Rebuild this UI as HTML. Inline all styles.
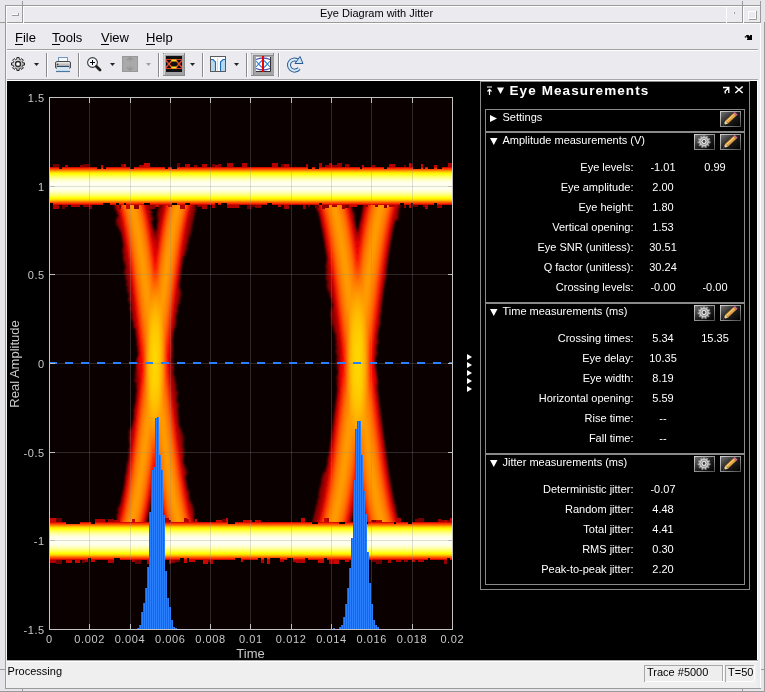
<!DOCTYPE html><html><head><meta charset="utf-8"><style>
html,body{margin:0;padding:0;background:#e9e8ec;width:765px;height:692px;overflow:hidden}
svg{position:absolute;left:0;top:0;display:block}
text{font-family:'Liberation Sans', sans-serif}
.blend{isolation:isolate}
.scr{mix-blend-mode:screen}
</style></head><body>
<svg width="765" height="692" viewBox="0 0 765 692">
<defs>
<linearGradient id="band" x1="0" y1="0" x2="0" y2="1">
 <stop offset="0" stop-color="#b00000"/>
 <stop offset="0.03" stop-color="#ff2000"/>
 <stop offset="0.08" stop-color="#ff7000"/>
 <stop offset="0.13" stop-color="#ffd000"/>
 <stop offset="0.18" stop-color="#ffff00"/>
 <stop offset="0.26" stop-color="#ffff70"/>
 <stop offset="0.34" stop-color="#ffffc0"/>
 <stop offset="0.42" stop-color="#fffff0"/>
 <stop offset="0.58" stop-color="#fffff0"/>
 <stop offset="0.66" stop-color="#ffffc0"/>
 <stop offset="0.74" stop-color="#ffff70"/>
 <stop offset="0.82" stop-color="#ffff00"/>
 <stop offset="0.87" stop-color="#ffd000"/>
 <stop offset="0.92" stop-color="#ff7000"/>
 <stop offset="0.97" stop-color="#ff2000"/>
 <stop offset="1" stop-color="#b00000"/>
</linearGradient>
<linearGradient id="arm" gradientUnits="userSpaceOnUse" x1="-17" y1="0" x2="17" y2="0">
 <stop offset="0" stop-color="#700000"/>
 <stop offset="0.06" stop-color="#b00000"/>
 <stop offset="0.16" stop-color="#f01000"/>
 <stop offset="0.28" stop-color="#ff5800"/>
 <stop offset="0.37" stop-color="#ff8400"/>
 <stop offset="0.50" stop-color="#ff9400"/>
 <stop offset="0.63" stop-color="#ff8400"/>
 <stop offset="0.72" stop-color="#ff5800"/>
 <stop offset="0.84" stop-color="#f01000"/>
 <stop offset="0.94" stop-color="#b00000"/>
 <stop offset="1" stop-color="#700000"/>
</linearGradient>
<linearGradient id="gearg" x1="0" y1="0" x2="1" y2="1"><stop offset="0" stop-color="#fafafa"/><stop offset="1" stop-color="#a0a0a0"/></linearGradient>
<linearGradient id="prng" x1="0" y1="0" x2="0" y2="1"><stop offset="0" stop-color="#f4f4f4"/><stop offset="0.5" stop-color="#b8b8b8"/><stop offset="1" stop-color="#888"/></linearGradient>
<clipPath id="axclip"><rect x="50" y="98" width="402" height="531"/></clipPath>
</defs>

<rect x="0" y="0" width="765" height="692" fill="#e6e5e9"/>
<rect x="6" y="6" width="754" height="682" fill="#ebeaee"/>
<rect x="5" y="5" width="756" height="1" fill="#9a9a9a"/>
<rect x="6" y="6" width="754" height="1" fill="#ffffff"/>
<rect x="5" y="22" width="756" height="1" fill="#9a9a9a"/>
<rect x="6" y="23" width="754" height="1" fill="#ffffff"/>
<rect x="5" y="5" width="1" height="684" fill="#9a9a9a"/>
<rect x="6" y="6" width="1" height="17" fill="#ffffff"/>
<rect x="6" y="23" width="1" height="666" fill="#f4f3f7"/>
<rect x="22" y="1" width="1" height="22" fill="#9a9a9a"/>
<rect x="23" y="6" width="1" height="17" fill="#ffffff"/>
<rect x="726" y="6" width="1" height="17" fill="#ffffff"/>
<rect x="742" y="1" width="1" height="22" fill="#9a9a9a"/>
<rect x="743" y="6" width="1" height="17" fill="#ffffff"/>
<rect x="760" y="1" width="1" height="22" fill="#9a9a9a"/>
<rect x="760" y="23" width="1" height="665" fill="#ffffff"/>
<rect x="757" y="81" width="1" height="579" fill="#ffffff"/>
<rect x="764" y="22" width="1" height="671" fill="#9a9a9a"/>
<rect x="0" y="22" width="6" height="1" fill="#9a9a9a"/>
<rect x="12" y="14" width="7" height="1" fill="#ffffff"/>
<rect x="12" y="15" width="7" height="1" fill="#9a9a9a"/>
<rect x="18" y="13" width="1" height="2" fill="#9a9a9a"/>
<rect x="734" y="12" width="1" height="2" fill="#9a9a9a"/>
<rect x="733" y="13" width="1" height="1" fill="#ffffff"/>
<rect x="748.5" y="11.5" width="7" height="7" fill="none" stroke="#ffffff"/>
<path d="M749 19.5H756.5V11" fill="none" stroke="#9a9a9a"/>
<text x="320" y="17" font-size="11" fill="#000">Eye Diagram with Jitter</text>
<rect x="5" y="688" width="756" height="1" fill="#9a9a9a"/>
<rect x="0" y="691" width="766" height="1" fill="#9a9a9a"/>
<rect x="742" y="688" width="1" height="5" fill="#9a9a9a"/>
<rect x="761" y="669" width="5" height="1" fill="#9a9a9a"/>
<rect x="22" y="688" width="1" height="5" fill="#9a9a9a"/>
<rect x="0" y="669" width="6" height="1" fill="#9a9a9a"/>
<text x="15" y="42" font-size="13" fill="#000">File</text>
<rect x="15" y="44" width="8" height="1" fill="#000"/>
<text x="52" y="42" font-size="13" fill="#000">Tools</text>
<rect x="52" y="44" width="8" height="1" fill="#000"/>
<text x="101" y="42" font-size="13" fill="#000">View</text>
<rect x="101" y="44" width="8" height="1" fill="#000"/>
<text x="146" y="42" font-size="13" fill="#000">Help</text>
<rect x="146" y="44" width="9" height="1" fill="#000"/>
<rect x="7" y="49" width="751" height="1" fill="#a0a0a0"/>
<rect x="7" y="50" width="751" height="1" fill="#ffffff"/>
<path d="M746 35 H748.5 L750 36.5 V35 H752 V40 H747 V38.5 H748 L746.5 37 Z" fill="#000"/>
<rect x="744.8" y="36.2" width="1.4" height="1.4" fill="#000"/>
<polygon points="16.83,59.14 16.87,57.50 19.13,57.50 19.17,59.14 20.61,59.74 21.80,58.60 23.40,60.20 22.26,61.39 22.86,62.83 24.50,62.87 24.50,65.13 22.86,65.17 22.26,66.61 23.40,67.80 21.80,69.40 20.61,68.26 19.17,68.86 19.13,70.50 16.87,70.50 16.83,68.86 15.39,68.26 14.20,69.40 12.60,67.80 13.74,66.61 13.14,65.17 11.50,65.13 11.50,62.87 13.14,62.83 13.74,61.39 12.60,60.20 14.20,58.60 15.39,59.74" fill="url(#gearg)" stroke="#262626" stroke-width="1" stroke-linejoin="round"/>
<circle cx="18" cy="64" r="2.5" fill="#ffffff" stroke="#262626" stroke-width="1.3"/>
<path d="M34 63 H39 L36.5 66 Z" fill="#222"/>
<rect x="46" y="53" width="1" height="24" fill="#8a8a8a"/>
<rect x="47" y="53" width="1" height="24" fill="#ffffff"/>
<rect x="58.5" y="57.5" width="9" height="4.5" fill="#f4f8fc" stroke="#7098c0"/>
<rect x="55.5" y="61.5" width="15" height="7" rx="1.5" fill="url(#prng)" stroke="#484848"/>
<circle cx="57.6" cy="64.4" r="0.8" fill="#303030"/>
<path d="M57 66.5 H69 L70 71.5 H56 Z" fill="#d4e6f2"/>
<path d="M57 66.5 H69" stroke="#2a4a70" stroke-width="1"/>
<path d="M56 71.5 H70" stroke="#4a78a0" stroke-width="1.2"/>
<rect x="78" y="53" width="1" height="24" fill="#8a8a8a"/>
<rect x="79" y="53" width="1" height="24" fill="#ffffff"/>
<circle cx="92.5" cy="62.5" r="4.9" fill="#f2f8fc" stroke="#3a3a3a" stroke-width="1.1"/>
<path d="M90 62.5 H95 M92.5 60 V65" stroke="#000" stroke-width="1"/>
<path d="M96.5 66.5 L100 70" stroke="#202020" stroke-width="2.8" stroke-linecap="round"/>
<path d="M110 63 H115 L112.5 66 Z" fill="#222"/>
<rect x="122.5" y="56.5" width="15" height="15" fill="#a9a9a9" stroke="#999"/>
<path d="M127 60 L130 57.3 L133 60 M130 57.5 V61.5 M127 67.5 L130 70.2 L133 67.5 M130 66 V70" stroke="#949494" stroke-width="1.2" fill="none"/>
<path d="M146 63 H151 L148.5 66 Z" fill="#a0a0a0"/>
<rect x="158" y="53" width="1" height="24" fill="#8a8a8a"/>
<rect x="159" y="53" width="1" height="24" fill="#ffffff"/>
<rect x="163.5" y="53.5" width="21" height="22" fill="#a2a2a2" stroke="#8a8a8a"/>
<path d="M164 75 V54 H184" stroke="#ffffff" fill="none"/>
<rect x="166" y="56" width="16" height="16" fill="#111"/>
<path d="M166 59.5 H182 M166 68.5 H182" stroke="#e03a28" stroke-width="1.2" fill="none"/>
<path d="M166 60.5 L169 64 L166 67.5 M182 60.5 L179 64 L182 67.5 M169 64 L172 60.5 M169 64 L172 67.5 M179 64 L176 60.5 M179 64 L176 67.5" stroke="#f05030" stroke-width="1.2" fill="none"/>
<path d="M171.5 60.5 H176.5 M171.5 67.5 H176.5" stroke="#f8e020" stroke-width="1.8"/>
<path d="M190 63 H195 L192.5 66 Z" fill="#222"/>
<rect x="202" y="53" width="1" height="24" fill="#8a8a8a"/>
<rect x="203" y="53" width="1" height="24" fill="#ffffff"/>
<rect x="210.5" y="56.5" width="15" height="15" fill="#ffffff" stroke="#5a5a5a"/>
<path d="M211 60 H213 L215.5 62.5 V71 H211 Z M225 60 H223 L220.5 62.5 V71 H225 Z" fill="#b4d8ee"/>
<path d="M211 59.5 H213 L215.5 62 V71 M225 59.5 H223 L220.5 62 V71" stroke="#1a68c0" stroke-width="1.1" fill="none"/>
<rect x="217" y="58" width="1" height="13" fill="#d8d8d8"/>
<path d="M234 63 H239 L236.5 66 Z" fill="#222"/>
<rect x="246" y="53" width="1" height="24" fill="#8a8a8a"/>
<rect x="247" y="53" width="1" height="24" fill="#ffffff"/>
<rect x="251.5" y="53.5" width="22" height="22" fill="#a2a2a2" stroke="#8a8a8a"/>
<path d="M252 75 V54 H273" stroke="#ffffff" fill="none"/>
<rect x="253" y="55" width="21" height="20" fill="#a4a4a4"/>
<path d="M253.5 75 V55.5 H274" stroke="#8a8a8a" fill="none"/>
<rect x="256" y="57" width="14.5" height="14.5" fill="#ffffff"/>
<path d="M256 71.5 H270.5 V57" stroke="#303030" fill="none"/>
<path d="M256 59.5 Q263 56.5 270 59.5 M256 68.5 Q263 71.5 270 68.5" stroke="#4450b0" stroke-width="1.3" fill="none"/>
<path d="M256 61 L258.5 64 L256 67 M258.5 64 L262 60.5 M258.5 64 L262 67.5 M270 61 L267.5 64 L270 67 M267.5 64 L264 60.5 M267.5 64 L264 67.5" stroke="#3a80d0" stroke-width="1.1" fill="none"/>
<rect x="262" y="56" width="2" height="16" fill="#f00000"/>
<rect x="278" y="53" width="1" height="24" fill="#8a8a8a"/>
<rect x="279" y="53" width="1" height="24" fill="#ffffff"/>
<path d="M298.5 61 A5.6 5.6 0 1 0 299 68.5" stroke="#2a5a90" stroke-width="4" fill="none"/>
<path d="M298.5 61 A5.6 5.6 0 1 0 299 68.5" stroke="#d8ecfa" stroke-width="2" fill="none"/>
<path d="M295 63.5 L303 63.5 L300 56.5 Z" fill="#c8e2f6" stroke="#2a5a90" stroke-width="1"/>
<rect x="7" y="79" width="751" height="1" fill="#a8a8a8"/>
<rect x="7" y="80" width="751" height="1" fill="#ffffff"/>
<rect x="7" y="81" width="750" height="579" fill="#000000"/>
<rect x="7" y="660" width="751" height="1" fill="#a8a8a8"/>
<rect x="7" y="661" width="750" height="27" fill="#efefef"/>
<rect x="7" y="661" width="751" height="1" fill="#ffffff"/>
<text x="7.6" y="675" font-size="11" fill="#000">Processing</text>
<rect x="644.5" y="665.5" width="78" height="16" fill="#eeeeee" stroke="#a8a8a8"/>
<path d="M645 681.5 H723.5 V665" stroke="#ffffff" fill="none"/>
<text x="647" y="676" font-size="11" fill="#000">Trace #5000</text>
<rect x="725.5" y="665.5" width="29" height="16" fill="#eeeeee" stroke="#a8a8a8"/>
<path d="M726 681.5 H754.5 V665" stroke="#ffffff" fill="none"/>
<text x="728" y="676" font-size="11" fill="#000">T=50</text>
<rect x="50" y="98" width="402" height="531" fill="#0b0000"/>
<g clip-path="url(#axclip)">
<g class="blend">
<filter id="soft" x="-0.2" y="-0.05" width="1.4" height="1.1"><feGaussianBlur stdDeviation="0.9"/></filter>
<g class="scr" filter="url(#soft)">
<polygon points="112.1,196 112.1,199 112.2,199 112.2,202 113.2,202 113.2,205 114.8,205 114.8,208 115.3,208 115.3,211 117.0,211 117.0,214 118.7,214 118.7,217 116.4,217 116.4,220 116.0,220 116.0,223 116.6,223 116.6,226 118.3,226 118.3,229 119.9,229 119.9,232 121.3,232 121.3,235 121.9,235 121.9,238 122.4,238 122.4,241 122.9,241 122.9,244 123.5,244 123.5,247 122.8,247 122.8,250 122.4,250 122.4,253 123.3,253 123.3,256 123.0,256 123.0,259 123.6,259 123.6,262 124.4,262 124.4,265 125.4,265 125.4,268 124.8,268 124.8,271 124.3,271 124.3,274 125.7,274 125.7,277 125.5,277 125.5,280 126.9,280 126.9,283 126.2,283 126.2,286 127.5,286 127.5,289 127.3,289 127.3,292 128.5,292 128.5,295 129.0,295 129.0,298 128.1,298 128.1,301 129.4,301 129.4,304 130.5,304 130.5,307 129.7,307 129.7,310 130.6,310 130.6,313 131.6,313 131.6,316 131.2,316 131.2,319 132.5,319 132.5,322 133.5,322 133.5,325 133.3,325 133.3,328 136.2,328 136.2,331 136.3,331 136.3,334 136.4,334 136.4,337 136.9,337 136.9,340 137.3,340 137.3,343 136.8,343 136.8,346 138.0,346 138.0,349 137.6,349 137.6,352 138.7,352 138.7,355 138.0,355 138.0,358 137.2,358 137.2,361 137.4,361 137.4,364 136.3,364 136.3,367 137.3,367 137.3,370 138.3,370 138.3,373 138.4,373 138.4,376 139.5,376 139.5,379 140.9,379 140.9,382 141.1,382 141.1,385 141.2,385 141.2,388 140.6,388 140.6,391 142.1,391 142.1,394 144.2,394 144.2,397 144.9,397 144.9,400 145.7,400 145.7,403 145.1,403 145.1,406 145.1,406 145.1,409 146.8,409 146.8,412 147.1,412 147.1,415 147.0,415 147.0,418 147.9,418 147.9,421 148.3,421 148.3,424 148.6,424 148.6,427 149.0,427 149.0,430 148.8,430 148.8,433 148.6,433 148.6,436 148.3,436 148.3,439 149.1,439 149.1,442 148.5,442 148.5,445 149.1,445 149.1,448 148.6,448 148.6,451 148.7,451 148.7,454 148.9,454 148.9,457 150.4,457 150.4,460 149.6,460 149.6,463 149.5,463 149.5,466 149.3,466 149.3,469 149.9,469 149.9,472 151.4,472 151.4,475 153.0,475 153.0,478 153.5,478 153.5,481 153.4,481 153.4,484 153.7,484 153.7,487 155.7,487 155.7,490 155.8,490 155.8,493 157.1,493 157.1,496 157.2,496 157.2,499 156.8,499 156.8,502 157.0,502 157.0,505 157.7,505 157.7,508 157.3,508 157.3,511 158.2,511 158.2,514 159.3,514 159.3,517 159.1,517 159.1,520 159.3,520 159.3,523 160.6,523 160.6,526 161.5,526 161.5,529 162.9,529 162.9,532 199.0,532 199.0,529 197.7,529 197.7,526 196.9,526 196.9,523 195.1,523 195.1,520 193.5,520 193.5,517 193.9,517 193.9,514 194.0,514 194.0,511 193.5,511 193.5,508 193.0,508 193.0,505 191.6,505 191.6,502 189.7,502 189.7,499 189.1,499 189.1,496 189.0,496 189.0,493 188.5,493 188.5,490 186.7,490 186.7,487 185.0,487 185.0,484 184.5,484 184.5,481 184.9,481 184.9,478 184.3,478 184.3,475 187.2,475 187.2,472 186.3,472 186.3,469 185.3,469 185.3,466 183.7,466 183.7,463 182.8,463 182.8,460 183.4,460 183.4,457 183.9,457 183.9,454 183.7,454 183.7,451 184.2,451 184.2,448 183.3,448 183.3,445 183.2,445 183.2,442 183.5,442 183.5,439 183.5,439 183.5,436 182.6,436 182.6,433 181.6,433 181.6,430 180.4,430 180.4,427 179.2,427 179.2,424 178.5,424 178.5,421 178.8,421 178.8,418 178.4,418 178.4,415 178.3,415 178.3,412 177.8,412 177.8,409 178.1,409 178.1,406 178.6,406 178.6,403 176.8,403 176.8,400 176.9,400 176.9,397 177.1,397 177.1,394 177.9,394 177.9,391 175.8,391 175.8,388 176.2,388 176.2,385 175.9,385 175.9,382 174.8,382 174.8,379 174.8,379 174.8,376 173.4,376 173.4,373 173.3,373 173.3,370 174.0,370 174.0,367 173.6,367 173.6,364 172.6,364 172.6,361 172.2,361 172.2,358 172.9,358 172.9,355 172.6,355 172.6,352 172.9,352 172.9,349 172.6,349 172.6,346 172.2,346 172.2,343 171.1,343 171.1,340 171.0,340 171.0,337 170.5,337 170.5,334 170.1,334 170.1,331 169.2,331 169.2,328 168.8,328 168.8,325 168.7,325 168.7,322 167.3,322 167.3,319 166.1,319 166.1,316 165.7,316 165.7,313 166.4,313 166.4,310 166.8,310 166.8,307 167.5,307 167.5,304 166.2,304 166.2,301 165.7,301 165.7,298 166.4,298 166.4,295 165.5,295 165.5,292 165.6,292 165.6,289 165.2,289 165.2,286 164.1,286 164.1,283 164.4,283 164.4,280 164.0,280 164.0,277 163.6,277 163.6,274 163.2,274 163.2,271 162.8,271 162.8,268 162.1,268 162.1,265 162.0,265 162.0,262 161.5,262 161.5,259 161.1,259 161.1,256 157.6,256 157.6,253 157.4,253 157.4,250 156.7,250 156.7,247 155.8,247 155.8,244 155.9,244 155.9,241 154.9,241 154.9,238 155.5,238 155.5,235 155.1,235 155.1,232 154.2,232 154.2,229 152.9,229 152.9,226 152.0,226 152.0,223 151.2,223 151.2,220 153.5,220 153.5,217 151.4,217 151.4,214 151.9,214 151.9,211 151.0,211 151.0,208 151.5,208 151.5,205 149.9,205 149.9,202 148.0,202 148.0,199 147.7,199 147.7,196" fill="#8a0000"/>
<path d="M126.65,190 L128.46,194 L129.88,198 L131.09,202 L132.16,206 L133.14,210 L134.04,214 L134.89,218 L135.69,222 L136.46,226 L137.19,230 L137.89,234 L138.57,238 L139.23,242 L139.87,246 L140.49,250 L141.10,254 L141.69,258 L142.27,262 L142.84,266 L143.40,270 L143.96,274 L144.50,278 L145.04,282 L145.57,286 L146.09,290 L146.61,294 L147.12,298 L147.62,302 L148.13,306 L148.63,310 L149.12,314 L149.61,318 L150.10,322 L150.59,326 L151.07,330 L151.55,334 L152.03,338 L152.51,342 L152.98,346 L153.46,350 L153.93,354 L154.41,358 L154.88,362 L155.36,366 L155.83,370 L156.30,374 L156.78,378 L157.25,382 L157.73,386 L158.21,390 L158.69,394 L159.17,398 L159.66,402 L160.14,406 L160.63,410 L161.13,414 L161.62,418 L162.12,422 L162.63,426 L163.14,430 L163.65,434 L164.17,438 L164.70,442 L165.23,446 L165.77,450 L166.32,454 L166.87,458 L167.44,462 L168.02,466 L168.61,470 L169.21,474 L169.82,478 L170.45,482 L171.10,486 L171.77,490 L172.46,494 L173.18,498 L173.92,502 L174.70,506 L175.53,510 L176.40,514 L177.34,518 L178.36,522 L179.49,526 L180.79,530 L182.37,534 L184.34,538" fill="none" stroke="#b00000" stroke-width="30.6"/>
<path d="M126.65,190 L128.46,194 L129.88,198 L131.09,202 L132.16,206 L133.14,210 L134.04,214 L134.89,218 L135.69,222 L136.46,226 L137.19,230 L137.89,234 L138.57,238 L139.23,242 L139.87,246 L140.49,250 L141.10,254 L141.69,258 L142.27,262 L142.84,266 L143.40,270 L143.96,274 L144.50,278 L145.04,282 L145.57,286 L146.09,290 L146.61,294 L147.12,298 L147.62,302 L148.13,306 L148.63,310 L149.12,314 L149.61,318 L150.10,322 L150.59,326 L151.07,330 L151.55,334 L152.03,338 L152.51,342 L152.98,346 L153.46,350 L153.93,354 L154.41,358 L154.88,362 L155.36,366 L155.83,370 L156.30,374 L156.78,378 L157.25,382 L157.73,386 L158.21,390 L158.69,394 L159.17,398 L159.66,402 L160.14,406 L160.63,410 L161.13,414 L161.62,418 L162.12,422 L162.63,426 L163.14,430 L163.65,434 L164.17,438 L164.70,442 L165.23,446 L165.77,450 L166.32,454 L166.87,458 L167.44,462 L168.02,466 L168.61,470 L169.21,474 L169.82,478 L170.45,482 L171.10,486 L171.77,490 L172.46,494 L173.18,498 L173.92,502 L174.70,506 L175.53,510 L176.40,514 L177.34,518 L178.36,522 L179.49,526 L180.79,530 L182.37,534 L184.34,538" fill="none" stroke="#e00800" stroke-width="26.7"/>
<path d="M126.65,190 L128.46,194 L129.88,198 L131.09,202 L132.16,206 L133.14,210 L134.04,214 L134.89,218 L135.69,222 L136.46,226 L137.19,230 L137.89,234 L138.57,238 L139.23,242 L139.87,246 L140.49,250 L141.10,254 L141.69,258 L142.27,262 L142.84,266 L143.40,270 L143.96,274 L144.50,278 L145.04,282 L145.57,286 L146.09,290 L146.61,294 L147.12,298 L147.62,302 L148.13,306 L148.63,310 L149.12,314 L149.61,318 L150.10,322 L150.59,326 L151.07,330 L151.55,334 L152.03,338 L152.51,342 L152.98,346 L153.46,350 L153.93,354 L154.41,358 L154.88,362 L155.36,366 L155.83,370 L156.30,374 L156.78,378 L157.25,382 L157.73,386 L158.21,390 L158.69,394 L159.17,398 L159.66,402 L160.14,406 L160.63,410 L161.13,414 L161.62,418 L162.12,422 L162.63,426 L163.14,430 L163.65,434 L164.17,438 L164.70,442 L165.23,446 L165.77,450 L166.32,454 L166.87,458 L167.44,462 L168.02,466 L168.61,470 L169.21,474 L169.82,478 L170.45,482 L171.10,486 L171.77,490 L172.46,494 L173.18,498 L173.92,502 L174.70,506 L175.53,510 L176.40,514 L177.34,518 L178.36,522 L179.49,526 L180.79,530 L182.37,534 L184.34,538" fill="none" stroke="#ff3800" stroke-width="21.7"/>
<path d="M126.65,190 L128.46,194 L129.88,198 L131.09,202 L132.16,206 L133.14,210 L134.04,214 L134.89,218 L135.69,222 L136.46,226 L137.19,230 L137.89,234 L138.57,238 L139.23,242 L139.87,246 L140.49,250 L141.10,254 L141.69,258 L142.27,262 L142.84,266 L143.40,270 L143.96,274 L144.50,278 L145.04,282 L145.57,286 L146.09,290 L146.61,294 L147.12,298 L147.62,302 L148.13,306 L148.63,310 L149.12,314 L149.61,318 L150.10,322 L150.59,326 L151.07,330 L151.55,334 L152.03,338 L152.51,342 L152.98,346 L153.46,350 L153.93,354 L154.41,358 L154.88,362 L155.36,366 L155.83,370 L156.30,374 L156.78,378 L157.25,382 L157.73,386 L158.21,390 L158.69,394 L159.17,398 L159.66,402 L160.14,406 L160.63,410 L161.13,414 L161.62,418 L162.12,422 L162.63,426 L163.14,430 L163.65,434 L164.17,438 L164.70,442 L165.23,446 L165.77,450 L166.32,454 L166.87,458 L167.44,462 L168.02,466 L168.61,470 L169.21,474 L169.82,478 L170.45,482 L171.10,486 L171.77,490 L172.46,494 L173.18,498 L173.92,502 L174.70,506 L175.53,510 L176.40,514 L177.34,518 L178.36,522 L179.49,526 L180.79,530 L182.37,534 L184.34,538" fill="none" stroke="#ff6a00" stroke-width="16.8"/>
<path d="M126.65,190 L128.46,194 L129.88,198 L131.09,202 L132.16,206 L133.14,210 L134.04,214 L134.89,218 L135.69,222 L136.46,226 L137.19,230 L137.89,234 L138.57,238 L139.23,242 L139.87,246 L140.49,250 L141.10,254 L141.69,258 L142.27,262 L142.84,266 L143.40,270 L143.96,274 L144.50,278 L145.04,282 L145.57,286 L146.09,290 L146.61,294 L147.12,298 L147.62,302 L148.13,306 L148.63,310 L149.12,314 L149.61,318 L150.10,322 L150.59,326 L151.07,330 L151.55,334 L152.03,338 L152.51,342 L152.98,346 L153.46,350 L153.93,354 L154.41,358 L154.88,362 L155.36,366 L155.83,370 L156.30,374 L156.78,378 L157.25,382 L157.73,386 L158.21,390 L158.69,394 L159.17,398 L159.66,402 L160.14,406 L160.63,410 L161.13,414 L161.62,418 L162.12,422 L162.63,426 L163.14,430 L163.65,434 L164.17,438 L164.70,442 L165.23,446 L165.77,450 L166.32,454 L166.87,458 L167.44,462 L168.02,466 L168.61,470 L169.21,474 L169.82,478 L170.45,482 L171.10,486 L171.77,490 L172.46,494 L173.18,498 L173.92,502 L174.70,506 L175.53,510 L176.40,514 L177.34,518 L178.36,522 L179.49,526 L180.79,530 L182.37,534 L184.34,538" fill="none" stroke="#ff8600" stroke-width="11.9"/>
<path d="M126.65,190 L128.46,194 L129.88,198 L131.09,202 L132.16,206 L133.14,210 L134.04,214 L134.89,218 L135.69,222 L136.46,226 L137.19,230 L137.89,234 L138.57,238 L139.23,242 L139.87,246 L140.49,250 L141.10,254 L141.69,258 L142.27,262 L142.84,266 L143.40,270 L143.96,274 L144.50,278 L145.04,282 L145.57,286 L146.09,290 L146.61,294 L147.12,298 L147.62,302 L148.13,306 L148.63,310 L149.12,314 L149.61,318 L150.10,322 L150.59,326 L151.07,330 L151.55,334 L152.03,338 L152.51,342 L152.98,346 L153.46,350 L153.93,354 L154.41,358 L154.88,362 L155.36,366 L155.83,370 L156.30,374 L156.78,378 L157.25,382 L157.73,386 L158.21,390 L158.69,394 L159.17,398 L159.66,402 L160.14,406 L160.63,410 L161.13,414 L161.62,418 L162.12,422 L162.63,426 L163.14,430 L163.65,434 L164.17,438 L164.70,442 L165.23,446 L165.77,450 L166.32,454 L166.87,458 L167.44,462 L168.02,466 L168.61,470 L169.21,474 L169.82,478 L170.45,482 L171.10,486 L171.77,490 L172.46,494 L173.18,498 L173.92,502 L174.70,506 L175.53,510 L176.40,514 L177.34,518 L178.36,522 L179.49,526 L180.79,530 L182.37,534 L184.34,538" fill="none" stroke="#ff9a00" stroke-width="5.9"/>
</g>
<g class="scr" filter="url(#soft)">
<polygon points="162.9,196 162.9,199 161.1,199 161.1,202 159.7,202 159.7,205 159.3,205 159.3,208 158.2,208 158.2,211 157.6,211 157.6,214 157.2,214 157.2,217 157.6,217 157.6,220 157.9,220 157.9,223 157.0,223 157.0,226 157.1,226 157.1,229 156.1,229 156.1,232 155.2,232 155.2,235 154.7,235 154.7,238 153.0,238 153.0,241 152.2,241 152.2,244 151.7,244 151.7,247 151.3,247 151.3,250 152.6,250 152.6,253 153.7,253 153.7,256 152.2,256 152.2,259 151.8,259 151.8,262 151.2,262 151.2,265 150.4,265 150.4,268 151.0,268 151.0,271 147.9,271 147.9,274 148.3,274 148.3,277 148.7,277 148.7,280 146.6,280 146.6,283 146.4,283 146.4,286 145.8,286 145.8,289 145.9,289 145.9,292 145.4,292 145.4,295 144.6,295 144.6,298 145.4,298 145.4,301 146.2,301 146.2,304 145.2,304 145.2,307 143.8,307 143.8,310 144.5,310 144.5,313 142.4,313 142.4,316 142.2,316 142.2,319 141.7,319 141.7,322 141.3,322 141.3,325 140.9,325 140.9,328 140.6,328 140.6,331 140.2,331 140.2,334 140.0,334 140.0,337 140.7,337 140.7,340 141.2,340 141.2,343 140.5,343 140.5,346 140.7,346 140.7,349 140.5,349 140.5,352 140.1,352 140.1,355 138.6,355 138.6,358 137.0,358 137.0,361 136.6,361 136.6,364 136.6,364 136.6,367 135.9,367 135.9,370 135.6,370 135.6,373 135.2,373 135.2,376 135.5,376 135.5,379 134.5,379 134.5,382 136.4,382 136.4,385 136.2,385 136.2,388 136.8,388 136.8,391 136.6,391 136.6,394 136.1,394 136.1,397 136.1,397 136.1,400 136.4,400 136.4,403 135.4,403 135.4,406 134.5,406 134.5,409 133.9,409 133.9,412 134.2,412 134.2,415 134.4,415 134.4,418 134.3,418 134.3,421 132.8,421 132.8,424 132.3,424 132.3,427 130.9,427 130.9,430 129.0,430 129.0,433 129.3,433 129.3,436 128.9,436 128.9,439 129.0,439 129.0,442 129.6,442 129.6,445 129.8,445 129.8,448 128.8,448 128.8,451 129.7,451 129.7,454 128.7,454 128.7,457 129.2,457 129.2,460 128.6,460 128.6,463 127.1,463 127.1,466 126.8,466 126.8,469 126.8,469 126.8,472 126.6,472 126.6,475 125.2,475 125.2,478 125.1,478 125.1,481 124.9,481 124.9,484 124.7,484 124.7,487 124.0,487 124.0,490 123.4,490 123.4,493 122.7,493 122.7,496 121.6,496 121.6,499 121.4,499 121.4,502 120.7,502 120.7,505 119.0,505 119.0,508 117.4,508 117.4,511 118.1,511 118.1,514 116.8,514 116.8,517 117.0,517 117.0,520 117.1,520 117.1,523 115.8,523 115.8,526 115.4,526 115.4,529 114.1,529 114.1,532 144.1,532 144.1,529 143.9,529 143.9,526 144.5,526 144.5,523 145.1,523 145.1,520 145.8,520 145.8,517 146.5,517 146.5,514 147.1,514 147.1,511 148.2,511 148.2,508 148.6,508 148.6,505 150.1,505 150.1,502 150.4,502 150.4,499 151.7,499 151.7,496 151.7,496 151.7,493 151.0,493 151.0,490 152.1,490 152.1,487 153.0,487 153.0,484 152.5,484 152.5,481 153.7,481 153.7,478 153.4,478 153.4,475 153.8,475 153.8,472 154.5,472 154.5,469 155.3,469 155.3,466 156.3,466 156.3,463 156.1,463 156.1,460 156.0,460 156.0,457 157.1,457 157.1,454 158.0,454 158.0,451 157.6,451 157.6,448 157.6,448 157.6,445 158.0,445 158.0,442 158.4,442 158.4,439 158.8,439 158.8,436 159.7,436 159.7,433 160.3,433 160.3,430 160.2,430 160.2,427 161.5,427 161.5,424 162.9,424 162.9,421 162.7,421 162.7,418 162.0,418 162.0,415 161.9,415 161.9,412 162.2,412 162.2,409 162.8,409 162.8,406 163.7,406 163.7,403 164.3,403 164.3,400 164.4,400 164.4,397 164.0,397 164.0,394 165.1,394 165.1,391 165.3,391 165.3,388 165.1,388 165.1,385 166.3,385 166.3,382 165.8,382 165.8,379 166.2,379 166.2,376 166.5,376 166.5,373 166.9,373 166.9,370 167.3,370 167.3,367 168.5,367 168.5,364 168.0,364 168.0,361 168.3,361 168.3,358 168.7,358 168.7,355 169.7,355 169.7,352 170.2,352 170.2,349 171.1,349 171.1,346 171.2,346 171.2,343 171.6,343 171.6,340 171.6,340 171.6,337 172.9,337 172.9,334 172.5,334 172.5,331 174.0,331 174.0,328 175.2,328 175.2,325 176.2,325 176.2,322 176.2,322 176.2,319 175.7,319 175.7,316 176.5,316 176.5,313 177.7,313 177.7,310 177.5,310 177.5,307 178.2,307 178.2,304 179.8,304 179.8,301 179.8,301 179.8,298 180.7,298 180.7,295 181.0,295 181.0,292 180.7,292 180.7,289 179.5,289 179.5,286 178.8,286 178.8,283 179.6,283 179.6,280 179.1,280 179.1,277 179.5,277 179.5,274 179.8,274 179.8,271 179.6,271 179.6,268 180.1,268 180.1,265 181.2,265 181.2,262 181.1,262 181.1,259 182.2,259 182.2,256 185.4,256 185.4,253 185.6,253 185.6,250 187.2,250 187.2,247 187.0,247 187.0,244 188.4,244 188.4,241 188.7,241 188.7,238 189.4,238 189.4,235 190.7,235 190.7,232 191.3,232 191.3,229 191.8,229 191.8,226 192.4,226 192.4,223 193.0,223 193.0,220 193.6,220 193.6,217 194.3,217 194.3,214 195.0,214 195.0,211 195.6,211 195.6,208 195.4,208 195.4,205 195.7,205 195.7,202 196.7,202 196.7,199 196.7,199 196.7,196" fill="#8a0000"/>
<path d="M183.35,190 L181.54,194 L180.12,198 L178.91,202 L177.84,206 L176.86,210 L175.96,214 L175.11,218 L174.31,222 L173.54,226 L172.81,230 L172.11,234 L171.43,238 L170.77,242 L170.13,246 L169.51,250 L168.90,254 L168.31,258 L167.73,262 L167.16,266 L166.60,270 L166.04,274 L165.50,278 L164.96,282 L164.43,286 L163.91,290 L163.39,294 L162.88,298 L162.38,302 L161.87,306 L161.37,310 L160.88,314 L160.39,318 L159.90,322 L159.41,326 L158.93,330 L158.45,334 L157.97,338 L157.49,342 L157.02,346 L156.54,350 L156.07,354 L155.59,358 L155.12,362 L154.64,366 L154.17,370 L153.70,374 L153.22,378 L152.75,382 L152.27,386 L151.79,390 L151.31,394 L150.83,398 L150.34,402 L149.86,406 L149.37,410 L148.87,414 L148.38,418 L147.88,422 L147.37,426 L146.86,430 L146.35,434 L145.83,438 L145.30,442 L144.77,446 L144.23,450 L143.68,454 L143.13,458 L142.56,462 L141.98,466 L141.39,470 L140.79,474 L140.18,478 L139.55,482 L138.90,486 L138.23,490 L137.54,494 L136.82,498 L136.08,502 L135.30,506 L134.47,510 L133.60,514 L132.66,518 L131.64,522 L130.51,526 L129.21,530 L127.63,534 L125.66,538" fill="none" stroke="#b00000" stroke-width="28.8"/>
<path d="M183.35,190 L181.54,194 L180.12,198 L178.91,202 L177.84,206 L176.86,210 L175.96,214 L175.11,218 L174.31,222 L173.54,226 L172.81,230 L172.11,234 L171.43,238 L170.77,242 L170.13,246 L169.51,250 L168.90,254 L168.31,258 L167.73,262 L167.16,266 L166.60,270 L166.04,274 L165.50,278 L164.96,282 L164.43,286 L163.91,290 L163.39,294 L162.88,298 L162.38,302 L161.87,306 L161.37,310 L160.88,314 L160.39,318 L159.90,322 L159.41,326 L158.93,330 L158.45,334 L157.97,338 L157.49,342 L157.02,346 L156.54,350 L156.07,354 L155.59,358 L155.12,362 L154.64,366 L154.17,370 L153.70,374 L153.22,378 L152.75,382 L152.27,386 L151.79,390 L151.31,394 L150.83,398 L150.34,402 L149.86,406 L149.37,410 L148.87,414 L148.38,418 L147.88,422 L147.37,426 L146.86,430 L146.35,434 L145.83,438 L145.30,442 L144.77,446 L144.23,450 L143.68,454 L143.13,458 L142.56,462 L141.98,466 L141.39,470 L140.79,474 L140.18,478 L139.55,482 L138.90,486 L138.23,490 L137.54,494 L136.82,498 L136.08,502 L135.30,506 L134.47,510 L133.60,514 L132.66,518 L131.64,522 L130.51,526 L129.21,530 L127.63,534 L125.66,538" fill="none" stroke="#e00800" stroke-width="25.1"/>
<path d="M183.35,190 L181.54,194 L180.12,198 L178.91,202 L177.84,206 L176.86,210 L175.96,214 L175.11,218 L174.31,222 L173.54,226 L172.81,230 L172.11,234 L171.43,238 L170.77,242 L170.13,246 L169.51,250 L168.90,254 L168.31,258 L167.73,262 L167.16,266 L166.60,270 L166.04,274 L165.50,278 L164.96,282 L164.43,286 L163.91,290 L163.39,294 L162.88,298 L162.38,302 L161.87,306 L161.37,310 L160.88,314 L160.39,318 L159.90,322 L159.41,326 L158.93,330 L158.45,334 L157.97,338 L157.49,342 L157.02,346 L156.54,350 L156.07,354 L155.59,358 L155.12,362 L154.64,366 L154.17,370 L153.70,374 L153.22,378 L152.75,382 L152.27,386 L151.79,390 L151.31,394 L150.83,398 L150.34,402 L149.86,406 L149.37,410 L148.87,414 L148.38,418 L147.88,422 L147.37,426 L146.86,430 L146.35,434 L145.83,438 L145.30,442 L144.77,446 L144.23,450 L143.68,454 L143.13,458 L142.56,462 L141.98,466 L141.39,470 L140.79,474 L140.18,478 L139.55,482 L138.90,486 L138.23,490 L137.54,494 L136.82,498 L136.08,502 L135.30,506 L134.47,510 L133.60,514 L132.66,518 L131.64,522 L130.51,526 L129.21,530 L127.63,534 L125.66,538" fill="none" stroke="#ff3800" stroke-width="20.4"/>
<path d="M183.35,190 L181.54,194 L180.12,198 L178.91,202 L177.84,206 L176.86,210 L175.96,214 L175.11,218 L174.31,222 L173.54,226 L172.81,230 L172.11,234 L171.43,238 L170.77,242 L170.13,246 L169.51,250 L168.90,254 L168.31,258 L167.73,262 L167.16,266 L166.60,270 L166.04,274 L165.50,278 L164.96,282 L164.43,286 L163.91,290 L163.39,294 L162.88,298 L162.38,302 L161.87,306 L161.37,310 L160.88,314 L160.39,318 L159.90,322 L159.41,326 L158.93,330 L158.45,334 L157.97,338 L157.49,342 L157.02,346 L156.54,350 L156.07,354 L155.59,358 L155.12,362 L154.64,366 L154.17,370 L153.70,374 L153.22,378 L152.75,382 L152.27,386 L151.79,390 L151.31,394 L150.83,398 L150.34,402 L149.86,406 L149.37,410 L148.87,414 L148.38,418 L147.88,422 L147.37,426 L146.86,430 L146.35,434 L145.83,438 L145.30,442 L144.77,446 L144.23,450 L143.68,454 L143.13,458 L142.56,462 L141.98,466 L141.39,470 L140.79,474 L140.18,478 L139.55,482 L138.90,486 L138.23,490 L137.54,494 L136.82,498 L136.08,502 L135.30,506 L134.47,510 L133.60,514 L132.66,518 L131.64,522 L130.51,526 L129.21,530 L127.63,534 L125.66,538" fill="none" stroke="#ff6a00" stroke-width="15.8"/>
<path d="M183.35,190 L181.54,194 L180.12,198 L178.91,202 L177.84,206 L176.86,210 L175.96,214 L175.11,218 L174.31,222 L173.54,226 L172.81,230 L172.11,234 L171.43,238 L170.77,242 L170.13,246 L169.51,250 L168.90,254 L168.31,258 L167.73,262 L167.16,266 L166.60,270 L166.04,274 L165.50,278 L164.96,282 L164.43,286 L163.91,290 L163.39,294 L162.88,298 L162.38,302 L161.87,306 L161.37,310 L160.88,314 L160.39,318 L159.90,322 L159.41,326 L158.93,330 L158.45,334 L157.97,338 L157.49,342 L157.02,346 L156.54,350 L156.07,354 L155.59,358 L155.12,362 L154.64,366 L154.17,370 L153.70,374 L153.22,378 L152.75,382 L152.27,386 L151.79,390 L151.31,394 L150.83,398 L150.34,402 L149.86,406 L149.37,410 L148.87,414 L148.38,418 L147.88,422 L147.37,426 L146.86,430 L146.35,434 L145.83,438 L145.30,442 L144.77,446 L144.23,450 L143.68,454 L143.13,458 L142.56,462 L141.98,466 L141.39,470 L140.79,474 L140.18,478 L139.55,482 L138.90,486 L138.23,490 L137.54,494 L136.82,498 L136.08,502 L135.30,506 L134.47,510 L133.60,514 L132.66,518 L131.64,522 L130.51,526 L129.21,530 L127.63,534 L125.66,538" fill="none" stroke="#ff8600" stroke-width="11.2"/>
<path d="M183.35,190 L181.54,194 L180.12,198 L178.91,202 L177.84,206 L176.86,210 L175.96,214 L175.11,218 L174.31,222 L173.54,226 L172.81,230 L172.11,234 L171.43,238 L170.77,242 L170.13,246 L169.51,250 L168.90,254 L168.31,258 L167.73,262 L167.16,266 L166.60,270 L166.04,274 L165.50,278 L164.96,282 L164.43,286 L163.91,290 L163.39,294 L162.88,298 L162.38,302 L161.87,306 L161.37,310 L160.88,314 L160.39,318 L159.90,322 L159.41,326 L158.93,330 L158.45,334 L157.97,338 L157.49,342 L157.02,346 L156.54,350 L156.07,354 L155.59,358 L155.12,362 L154.64,366 L154.17,370 L153.70,374 L153.22,378 L152.75,382 L152.27,386 L151.79,390 L151.31,394 L150.83,398 L150.34,402 L149.86,406 L149.37,410 L148.87,414 L148.38,418 L147.88,422 L147.37,426 L146.86,430 L146.35,434 L145.83,438 L145.30,442 L144.77,446 L144.23,450 L143.68,454 L143.13,458 L142.56,462 L141.98,466 L141.39,470 L140.79,474 L140.18,478 L139.55,482 L138.90,486 L138.23,490 L137.54,494 L136.82,498 L136.08,502 L135.30,506 L134.47,510 L133.60,514 L132.66,518 L131.64,522 L130.51,526 L129.21,530 L127.63,534 L125.66,538" fill="none" stroke="#ff9a00" stroke-width="5.6"/>
</g>
<g class="scr" filter="url(#soft)">
<polygon points="311.6,196 311.6,199 313.7,199 313.7,202 315.2,202 315.2,205 316.7,205 316.7,208 316.7,208 316.7,211 319.7,211 319.7,214 320.7,214 320.7,217 320.4,217 320.4,220 321.5,220 321.5,223 321.5,223 321.5,226 321.9,226 321.9,229 323.6,229 323.6,232 324.4,232 324.4,235 324.8,235 324.8,238 325.3,238 325.3,241 325.6,241 325.6,244 324.9,244 324.9,247 326.3,247 326.3,250 326.5,250 326.5,253 327.2,253 327.2,256 327.2,256 327.2,259 327.0,259 327.0,262 326.3,262 326.3,265 325.9,265 325.9,268 326.5,268 326.5,271 325.9,271 325.9,274 326.3,274 326.3,277 325.9,277 325.9,280 327.4,280 327.4,283 326.9,283 326.9,286 327.2,286 327.2,289 328.1,289 328.1,292 329.7,292 329.7,295 330.1,295 330.1,298 331.6,298 331.6,301 331.9,301 331.9,304 332.8,304 332.8,307 331.7,307 331.7,310 331.0,310 331.0,313 330.7,313 330.7,316 331.1,316 331.1,319 331.5,319 331.5,322 331.8,322 331.8,325 333.1,325 333.1,328 333.7,328 333.7,331 334.5,331 334.5,334 335.9,334 335.9,337 335.6,337 335.6,340 336.3,340 336.3,343 335.7,343 335.7,346 336.6,346 336.6,349 335.9,349 335.9,352 336.3,352 336.3,355 337.2,355 337.2,358 336.6,358 336.6,361 336.6,361 336.6,364 337.0,364 337.0,367 337.3,367 337.3,370 338.4,370 338.4,373 339.5,373 339.5,376 339.8,376 339.8,379 340.6,379 340.6,382 340.1,382 340.1,385 341.4,385 341.4,388 340.7,388 340.7,391 342.1,391 342.1,394 342.9,394 342.9,397 344.0,397 344.0,400 345.0,400 345.0,403 344.7,403 344.7,406 344.7,406 344.7,409 344.8,409 344.8,412 345.7,412 345.7,415 345.6,415 345.6,418 343.6,418 343.6,421 344.2,421 344.2,424 344.4,424 344.4,427 345.3,427 345.3,430 346.0,430 346.0,433 345.8,433 345.8,436 346.7,436 346.7,439 347.9,439 347.9,442 347.3,442 347.3,445 347.2,445 347.2,448 347.6,448 347.6,451 348.8,451 348.8,454 348.8,454 348.8,457 348.9,457 348.9,460 349.3,460 349.3,463 349.7,463 349.7,466 350.1,466 350.1,469 351.4,469 351.4,472 352.6,472 352.6,475 353.7,475 353.7,478 353.5,478 353.5,481 353.3,481 353.3,484 353.8,484 353.8,487 354.1,487 354.1,490 355.8,490 355.8,493 355.8,493 355.8,496 355.4,496 355.4,499 356.8,499 356.8,502 357.5,502 357.5,505 358.7,505 358.7,508 360.3,508 360.3,511 360.8,511 360.8,514 360.7,514 360.7,517 362.2,517 362.2,520 364.0,520 364.0,523 364.5,523 364.5,526 365.8,526 365.8,529 367.5,529 367.5,532 400.5,532 400.5,529 399.2,529 399.2,526 398.6,526 398.6,523 398.1,523 398.1,520 397.9,520 397.9,517 396.5,517 396.5,514 396.0,514 396.0,511 395.4,511 395.4,508 395.5,508 395.5,505 393.8,505 393.8,502 392.7,502 392.7,499 392.5,499 392.5,496 392.3,496 392.3,493 390.7,493 390.7,490 390.0,490 390.0,487 389.4,487 389.4,484 388.8,484 388.8,481 388.3,481 388.3,478 387.9,478 387.9,475 387.4,475 387.4,472 387.3,472 387.3,469 387.2,469 387.2,466 386.7,466 386.7,463 387.1,463 387.1,460 385.7,460 385.7,457 385.8,457 385.8,454 385.6,454 385.6,451 384.9,451 384.9,448 383.4,448 383.4,445 383.3,445 383.3,442 382.6,442 382.6,439 382.6,439 382.6,436 382.7,436 382.7,433 381.4,433 381.4,430 381.0,430 381.0,427 380.8,427 380.8,424 380.2,424 380.2,421 379.8,421 379.8,418 379.4,418 379.4,415 379.4,415 379.4,412 378.9,412 378.9,409 378.3,409 378.3,406 377.9,406 377.9,403 377.5,403 377.5,400 377.2,400 377.2,397 376.8,397 376.8,394 376.7,394 376.7,391 376.7,391 376.7,388 377.2,388 377.2,385 377.8,385 377.8,382 378.1,382 378.1,379 376.6,379 376.6,376 375.8,376 375.8,373 374.4,373 374.4,370 374.6,370 374.6,367 373.4,367 373.4,364 372.8,364 372.8,361 372.8,361 372.8,358 372.9,358 372.9,355 371.7,355 371.7,352 371.3,352 371.3,349 371.0,349 371.0,346 370.6,346 370.6,343 370.2,343 370.2,340 369.9,340 369.9,337 369.5,337 369.5,334 369.1,334 369.1,331 369.5,331 369.5,328 369.6,328 369.6,325 369.6,325 369.6,322 367.6,322 367.6,319 367.8,319 367.8,316 366.9,316 366.9,313 366.5,313 366.5,310 366.6,310 366.6,307 366.8,307 366.8,304 365.4,304 365.4,301 365.0,301 365.0,298 365.5,298 365.5,295 365.5,295 365.5,292 366.1,292 366.1,289 366.4,289 366.4,286 365.6,286 365.6,283 365.3,283 365.3,280 365.0,280 365.0,277 365.3,277 365.3,274 364.7,274 364.7,271 364.7,271 364.7,268 363.6,268 363.6,265 362.3,265 362.3,262 362.0,262 362.0,259 361.3,259 361.3,256 360.4,256 360.4,253 360.4,253 360.4,250 361.0,250 361.0,247 359.4,247 359.4,244 359.2,244 359.2,241 358.8,241 358.8,238 358.2,238 358.2,235 358.3,235 358.3,232 357.2,232 357.2,229 355.2,229 355.2,226 355.1,226 355.1,223 354.1,223 354.1,220 354.3,220 354.3,217 354.5,217 354.5,214 353.3,214 353.3,211 351.5,211 351.5,208 351.2,208 351.2,205 351.5,205 351.5,202 350.0,202 350.0,199 350.0,199 350.0,196" fill="#8a0000"/>
<path d="M328.47,190 L330.33,194 L331.78,198 L333.02,202 L334.12,206 L335.12,210 L336.04,214 L336.91,218 L337.73,222 L338.51,226 L339.26,230 L339.98,234 L340.68,238 L341.35,242 L342.01,246 L342.64,250 L343.26,254 L343.87,258 L344.47,262 L345.05,266 L345.63,270 L346.19,274 L346.75,278 L347.30,282 L347.84,286 L348.38,290 L348.91,294 L349.43,298 L349.95,302 L350.46,306 L350.97,310 L351.48,314 L351.98,318 L352.48,322 L352.98,326 L353.47,330 L353.97,334 L354.46,338 L354.95,342 L355.44,346 L355.92,350 L356.41,354 L356.89,358 L357.38,362 L357.86,366 L358.35,370 L358.83,374 L359.32,378 L359.81,382 L360.30,386 L360.79,390 L361.28,394 L361.77,398 L362.27,402 L362.77,406 L363.27,410 L363.77,414 L364.28,418 L364.79,422 L365.31,426 L365.83,430 L366.36,434 L366.89,438 L367.43,442 L367.97,446 L368.53,450 L369.09,454 L369.66,458 L370.24,462 L370.83,466 L371.43,470 L372.04,474 L372.67,478 L373.32,482 L373.98,486 L374.67,490 L375.37,494 L376.11,498 L376.87,502 L377.67,506 L378.52,510 L379.41,514 L380.37,518 L381.42,522 L382.58,526 L383.91,530 L385.52,534 L387.54,538" fill="none" stroke="#b00000" stroke-width="33.2"/>
<path d="M328.47,190 L330.33,194 L331.78,198 L333.02,202 L334.12,206 L335.12,210 L336.04,214 L336.91,218 L337.73,222 L338.51,226 L339.26,230 L339.98,234 L340.68,238 L341.35,242 L342.01,246 L342.64,250 L343.26,254 L343.87,258 L344.47,262 L345.05,266 L345.63,270 L346.19,274 L346.75,278 L347.30,282 L347.84,286 L348.38,290 L348.91,294 L349.43,298 L349.95,302 L350.46,306 L350.97,310 L351.48,314 L351.98,318 L352.48,322 L352.98,326 L353.47,330 L353.97,334 L354.46,338 L354.95,342 L355.44,346 L355.92,350 L356.41,354 L356.89,358 L357.38,362 L357.86,366 L358.35,370 L358.83,374 L359.32,378 L359.81,382 L360.30,386 L360.79,390 L361.28,394 L361.77,398 L362.27,402 L362.77,406 L363.27,410 L363.77,414 L364.28,418 L364.79,422 L365.31,426 L365.83,430 L366.36,434 L366.89,438 L367.43,442 L367.97,446 L368.53,450 L369.09,454 L369.66,458 L370.24,462 L370.83,466 L371.43,470 L372.04,474 L372.67,478 L373.32,482 L373.98,486 L374.67,490 L375.37,494 L376.11,498 L376.87,502 L377.67,506 L378.52,510 L379.41,514 L380.37,518 L381.42,522 L382.58,526 L383.91,530 L385.52,534 L387.54,538" fill="none" stroke="#e00800" stroke-width="28.9"/>
<path d="M328.47,190 L330.33,194 L331.78,198 L333.02,202 L334.12,206 L335.12,210 L336.04,214 L336.91,218 L337.73,222 L338.51,226 L339.26,230 L339.98,234 L340.68,238 L341.35,242 L342.01,246 L342.64,250 L343.26,254 L343.87,258 L344.47,262 L345.05,266 L345.63,270 L346.19,274 L346.75,278 L347.30,282 L347.84,286 L348.38,290 L348.91,294 L349.43,298 L349.95,302 L350.46,306 L350.97,310 L351.48,314 L351.98,318 L352.48,322 L352.98,326 L353.47,330 L353.97,334 L354.46,338 L354.95,342 L355.44,346 L355.92,350 L356.41,354 L356.89,358 L357.38,362 L357.86,366 L358.35,370 L358.83,374 L359.32,378 L359.81,382 L360.30,386 L360.79,390 L361.28,394 L361.77,398 L362.27,402 L362.77,406 L363.27,410 L363.77,414 L364.28,418 L364.79,422 L365.31,426 L365.83,430 L366.36,434 L366.89,438 L367.43,442 L367.97,446 L368.53,450 L369.09,454 L369.66,458 L370.24,462 L370.83,466 L371.43,470 L372.04,474 L372.67,478 L373.32,482 L373.98,486 L374.67,490 L375.37,494 L376.11,498 L376.87,502 L377.67,506 L378.52,510 L379.41,514 L380.37,518 L381.42,522 L382.58,526 L383.91,530 L385.52,534 L387.54,538" fill="none" stroke="#ff3800" stroke-width="23.6"/>
<path d="M328.47,190 L330.33,194 L331.78,198 L333.02,202 L334.12,206 L335.12,210 L336.04,214 L336.91,218 L337.73,222 L338.51,226 L339.26,230 L339.98,234 L340.68,238 L341.35,242 L342.01,246 L342.64,250 L343.26,254 L343.87,258 L344.47,262 L345.05,266 L345.63,270 L346.19,274 L346.75,278 L347.30,282 L347.84,286 L348.38,290 L348.91,294 L349.43,298 L349.95,302 L350.46,306 L350.97,310 L351.48,314 L351.98,318 L352.48,322 L352.98,326 L353.47,330 L353.97,334 L354.46,338 L354.95,342 L355.44,346 L355.92,350 L356.41,354 L356.89,358 L357.38,362 L357.86,366 L358.35,370 L358.83,374 L359.32,378 L359.81,382 L360.30,386 L360.79,390 L361.28,394 L361.77,398 L362.27,402 L362.77,406 L363.27,410 L363.77,414 L364.28,418 L364.79,422 L365.31,426 L365.83,430 L366.36,434 L366.89,438 L367.43,442 L367.97,446 L368.53,450 L369.09,454 L369.66,458 L370.24,462 L370.83,466 L371.43,470 L372.04,474 L372.67,478 L373.32,482 L373.98,486 L374.67,490 L375.37,494 L376.11,498 L376.87,502 L377.67,506 L378.52,510 L379.41,514 L380.37,518 L381.42,522 L382.58,526 L383.91,530 L385.52,534 L387.54,538" fill="none" stroke="#ff6a00" stroke-width="18.2"/>
<path d="M328.47,190 L330.33,194 L331.78,198 L333.02,202 L334.12,206 L335.12,210 L336.04,214 L336.91,218 L337.73,222 L338.51,226 L339.26,230 L339.98,234 L340.68,238 L341.35,242 L342.01,246 L342.64,250 L343.26,254 L343.87,258 L344.47,262 L345.05,266 L345.63,270 L346.19,274 L346.75,278 L347.30,282 L347.84,286 L348.38,290 L348.91,294 L349.43,298 L349.95,302 L350.46,306 L350.97,310 L351.48,314 L351.98,318 L352.48,322 L352.98,326 L353.47,330 L353.97,334 L354.46,338 L354.95,342 L355.44,346 L355.92,350 L356.41,354 L356.89,358 L357.38,362 L357.86,366 L358.35,370 L358.83,374 L359.32,378 L359.81,382 L360.30,386 L360.79,390 L361.28,394 L361.77,398 L362.27,402 L362.77,406 L363.27,410 L363.77,414 L364.28,418 L364.79,422 L365.31,426 L365.83,430 L366.36,434 L366.89,438 L367.43,442 L367.97,446 L368.53,450 L369.09,454 L369.66,458 L370.24,462 L370.83,466 L371.43,470 L372.04,474 L372.67,478 L373.32,482 L373.98,486 L374.67,490 L375.37,494 L376.11,498 L376.87,502 L377.67,506 L378.52,510 L379.41,514 L380.37,518 L381.42,522 L382.58,526 L383.91,530 L385.52,534 L387.54,538" fill="none" stroke="#ff8600" stroke-width="12.8"/>
<path d="M328.47,190 L330.33,194 L331.78,198 L333.02,202 L334.12,206 L335.12,210 L336.04,214 L336.91,218 L337.73,222 L338.51,226 L339.26,230 L339.98,234 L340.68,238 L341.35,242 L342.01,246 L342.64,250 L343.26,254 L343.87,258 L344.47,262 L345.05,266 L345.63,270 L346.19,274 L346.75,278 L347.30,282 L347.84,286 L348.38,290 L348.91,294 L349.43,298 L349.95,302 L350.46,306 L350.97,310 L351.48,314 L351.98,318 L352.48,322 L352.98,326 L353.47,330 L353.97,334 L354.46,338 L354.95,342 L355.44,346 L355.92,350 L356.41,354 L356.89,358 L357.38,362 L357.86,366 L358.35,370 L358.83,374 L359.32,378 L359.81,382 L360.30,386 L360.79,390 L361.28,394 L361.77,398 L362.27,402 L362.77,406 L363.27,410 L363.77,414 L364.28,418 L364.79,422 L365.31,426 L365.83,430 L366.36,434 L366.89,438 L367.43,442 L367.97,446 L368.53,450 L369.09,454 L369.66,458 L370.24,462 L370.83,466 L371.43,470 L372.04,474 L372.67,478 L373.32,482 L373.98,486 L374.67,490 L375.37,494 L376.11,498 L376.87,502 L377.67,506 L378.52,510 L379.41,514 L380.37,518 L381.42,522 L382.58,526 L383.91,530 L385.52,534 L387.54,538" fill="none" stroke="#ff9a00" stroke-width="6.4"/>
</g>
<g class="scr" filter="url(#soft)">
<polygon points="365.1,196 365.1,199 363.7,199 363.7,202 363.8,202 363.8,205 363.4,205 363.4,208 362.7,208 362.7,211 362.3,211 362.3,214 362.3,214 362.3,217 362.1,217 362.1,220 360.9,220 360.9,223 359.5,223 359.5,226 359.1,226 359.1,229 358.3,229 358.3,232 357.7,232 357.7,235 356.8,235 356.8,238 356.6,238 356.6,241 355.0,241 355.0,244 355.4,244 355.4,247 355.2,247 355.2,250 354.9,250 354.9,253 352.2,253 352.2,256 353.8,256 353.8,259 352.8,259 352.8,262 353.3,262 353.3,265 354.0,265 354.0,268 353.6,268 353.6,271 353.6,271 353.6,274 352.4,274 352.4,277 352.2,277 352.2,280 351.2,280 351.2,283 351.1,283 351.1,286 350.5,286 350.5,289 351.0,289 351.0,292 350.8,292 350.8,295 350.4,295 350.4,298 350.0,298 350.0,301 349.6,301 349.6,304 349.3,304 349.3,307 348.9,307 348.9,310 348.5,310 348.5,313 348.1,313 348.1,316 346.8,316 346.8,319 347.4,319 347.4,322 347.0,322 347.0,325 346.6,325 346.6,328 346.2,328 346.2,331 345.1,331 345.1,334 345.5,334 345.5,337 344.8,337 344.8,340 344.8,340 344.8,343 343.5,343 343.5,346 343.3,346 343.3,349 342.4,349 342.4,352 343.2,352 343.2,355 343.0,355 343.0,358 342.0,358 342.0,361 342.2,361 342.2,364 340.6,364 340.6,367 339.5,367 339.5,370 338.6,370 338.6,373 337.5,373 337.5,376 336.5,376 336.5,379 337.1,379 337.1,382 336.9,382 336.9,385 337.2,385 337.2,388 338.0,388 338.0,391 338.2,391 338.2,394 338.2,394 338.2,397 337.1,397 337.1,400 336.4,400 336.4,403 336.5,403 336.5,406 336.7,406 336.7,409 335.7,409 335.7,412 334.8,412 334.8,415 334.0,415 334.0,418 335.2,418 335.2,421 334.8,421 334.8,424 334.4,424 334.4,427 333.9,427 333.9,430 333.6,430 333.6,433 333.2,433 333.2,436 332.8,436 332.8,439 332.4,439 332.4,442 332.0,442 332.0,445 331.1,445 331.1,448 331.2,448 331.2,451 329.7,451 329.7,454 330.0,454 330.0,457 327.7,457 327.7,460 327.6,460 327.6,463 327.8,463 327.8,466 326.4,466 326.4,469 325.7,469 325.7,472 323.3,472 323.3,475 322.4,475 322.4,478 321.5,478 321.5,481 321.3,481 321.3,484 320.6,484 320.6,487 319.6,487 319.6,490 319.2,490 319.2,493 318.5,493 318.5,496 318.8,496 318.8,499 317.4,499 317.4,502 317.2,502 317.2,505 316.1,505 316.1,508 315.5,508 315.5,511 314.8,511 314.8,514 314.0,514 314.0,517 313.2,517 313.2,520 312.4,520 312.4,523 311.4,523 311.4,526 310.3,526 310.3,529 309.0,529 309.0,532 347.3,532 347.3,529 348.1,529 348.1,526 349.0,526 349.0,523 349.6,523 349.6,520 350.4,520 350.4,517 352.2,517 352.2,514 353.0,514 353.0,511 353.7,511 353.7,508 354.6,508 354.6,505 354.6,505 354.6,502 355.4,502 355.4,499 355.9,499 355.9,496 355.4,496 355.4,493 355.5,493 355.5,490 356.1,490 356.1,487 356.6,487 356.6,484 357.0,484 357.0,481 357.9,481 357.9,478 358.0,478 358.0,475 358.5,475 358.5,472 360.4,472 360.4,469 360.4,469 360.4,466 360.1,466 360.1,463 361.7,463 361.7,460 361.0,460 361.0,457 361.1,457 361.1,454 361.5,454 361.5,451 361.9,451 361.9,448 362.3,448 362.3,445 362.7,445 362.7,442 363.1,442 363.1,439 363.5,439 363.5,436 363.9,436 363.9,433 364.3,433 364.3,430 364.7,430 364.7,427 365.6,427 365.6,424 366.5,424 366.5,421 367.8,421 367.8,418 368.1,418 368.1,415 369.6,415 369.6,412 368.9,412 368.9,409 370.5,409 370.5,406 370.4,406 370.4,403 370.0,403 370.0,400 369.8,400 369.8,397 369.8,397 369.8,394 371.2,394 371.2,391 372.5,391 372.5,388 373.5,388 373.5,385 374.6,385 374.6,382 375.2,382 375.2,379 376.6,379 376.6,376 376.7,376 376.7,373 376.3,373 376.3,370 375.5,370 375.5,367 374.7,367 374.7,364 374.7,364 374.7,361 375.1,361 375.1,358 375.6,358 375.6,355 377.1,355 377.1,352 376.5,352 376.5,349 376.4,349 376.4,346 377.1,346 377.1,343 378.5,343 378.5,340 376.7,340 376.7,337 376.3,337 376.3,334 377.0,334 377.0,331 378.0,331 378.0,328 379.2,328 379.2,325 380.2,325 380.2,322 380.1,322 380.1,319 379.4,319 379.4,316 380.3,316 380.3,313 381.2,313 381.2,310 381.0,310 381.0,307 380.4,307 380.4,304 380.3,304 380.3,301 380.7,301 380.7,298 381.1,298 381.1,295 381.9,295 381.9,292 382.7,292 382.7,289 383.1,289 383.1,286 383.7,286 383.7,283 384.3,283 384.3,280 385.6,280 385.6,277 386.4,277 386.4,274 386.3,274 386.3,271 385.5,271 385.5,268 386.3,268 386.3,265 385.7,265 385.7,262 386.2,262 386.2,259 387.1,259 387.1,256 387.1,256 387.1,253 387.5,253 387.5,250 388.0,250 388.0,247 388.7,247 388.7,244 389.9,244 389.9,241 389.5,241 389.5,238 390.1,238 390.1,235 391.5,235 391.5,232 391.8,232 391.8,229 392.7,229 392.7,226 394.0,226 394.0,223 395.0,223 395.0,220 398.3,220 398.3,217 398.3,217 398.3,214 398.9,214 398.9,211 398.8,211 398.8,208 400.2,208 400.2,205 400.4,205 400.4,202 400.8,202 400.8,199 402.7,199 402.7,196" fill="#8a0000"/>
<path d="M386.53,190 L384.67,194 L383.22,198 L381.98,202 L380.88,206 L379.88,210 L378.96,214 L378.09,218 L377.27,222 L376.49,226 L375.74,230 L375.02,234 L374.32,238 L373.65,242 L372.99,246 L372.36,250 L371.74,254 L371.13,258 L370.53,262 L369.95,266 L369.37,270 L368.81,274 L368.25,278 L367.70,282 L367.16,286 L366.62,290 L366.09,294 L365.57,298 L365.05,302 L364.54,306 L364.03,310 L363.52,314 L363.02,318 L362.52,322 L362.02,326 L361.53,330 L361.03,334 L360.54,338 L360.05,342 L359.56,346 L359.08,350 L358.59,354 L358.11,358 L357.62,362 L357.14,366 L356.65,370 L356.17,374 L355.68,378 L355.19,382 L354.70,386 L354.21,390 L353.72,394 L353.23,398 L352.73,402 L352.23,406 L351.73,410 L351.23,414 L350.72,418 L350.21,422 L349.69,426 L349.17,430 L348.64,434 L348.11,438 L347.57,442 L347.03,446 L346.47,450 L345.91,454 L345.34,458 L344.76,462 L344.17,466 L343.57,470 L342.96,474 L342.33,478 L341.68,482 L341.02,486 L340.33,490 L339.63,494 L338.89,498 L338.13,502 L337.33,506 L336.48,510 L335.59,514 L334.63,518 L333.58,522 L332.42,526 L331.09,530 L329.48,534 L327.46,538" fill="none" stroke="#b00000" stroke-width="33.2"/>
<path d="M386.53,190 L384.67,194 L383.22,198 L381.98,202 L380.88,206 L379.88,210 L378.96,214 L378.09,218 L377.27,222 L376.49,226 L375.74,230 L375.02,234 L374.32,238 L373.65,242 L372.99,246 L372.36,250 L371.74,254 L371.13,258 L370.53,262 L369.95,266 L369.37,270 L368.81,274 L368.25,278 L367.70,282 L367.16,286 L366.62,290 L366.09,294 L365.57,298 L365.05,302 L364.54,306 L364.03,310 L363.52,314 L363.02,318 L362.52,322 L362.02,326 L361.53,330 L361.03,334 L360.54,338 L360.05,342 L359.56,346 L359.08,350 L358.59,354 L358.11,358 L357.62,362 L357.14,366 L356.65,370 L356.17,374 L355.68,378 L355.19,382 L354.70,386 L354.21,390 L353.72,394 L353.23,398 L352.73,402 L352.23,406 L351.73,410 L351.23,414 L350.72,418 L350.21,422 L349.69,426 L349.17,430 L348.64,434 L348.11,438 L347.57,442 L347.03,446 L346.47,450 L345.91,454 L345.34,458 L344.76,462 L344.17,466 L343.57,470 L342.96,474 L342.33,478 L341.68,482 L341.02,486 L340.33,490 L339.63,494 L338.89,498 L338.13,502 L337.33,506 L336.48,510 L335.59,514 L334.63,518 L333.58,522 L332.42,526 L331.09,530 L329.48,534 L327.46,538" fill="none" stroke="#e00800" stroke-width="28.9"/>
<path d="M386.53,190 L384.67,194 L383.22,198 L381.98,202 L380.88,206 L379.88,210 L378.96,214 L378.09,218 L377.27,222 L376.49,226 L375.74,230 L375.02,234 L374.32,238 L373.65,242 L372.99,246 L372.36,250 L371.74,254 L371.13,258 L370.53,262 L369.95,266 L369.37,270 L368.81,274 L368.25,278 L367.70,282 L367.16,286 L366.62,290 L366.09,294 L365.57,298 L365.05,302 L364.54,306 L364.03,310 L363.52,314 L363.02,318 L362.52,322 L362.02,326 L361.53,330 L361.03,334 L360.54,338 L360.05,342 L359.56,346 L359.08,350 L358.59,354 L358.11,358 L357.62,362 L357.14,366 L356.65,370 L356.17,374 L355.68,378 L355.19,382 L354.70,386 L354.21,390 L353.72,394 L353.23,398 L352.73,402 L352.23,406 L351.73,410 L351.23,414 L350.72,418 L350.21,422 L349.69,426 L349.17,430 L348.64,434 L348.11,438 L347.57,442 L347.03,446 L346.47,450 L345.91,454 L345.34,458 L344.76,462 L344.17,466 L343.57,470 L342.96,474 L342.33,478 L341.68,482 L341.02,486 L340.33,490 L339.63,494 L338.89,498 L338.13,502 L337.33,506 L336.48,510 L335.59,514 L334.63,518 L333.58,522 L332.42,526 L331.09,530 L329.48,534 L327.46,538" fill="none" stroke="#ff3800" stroke-width="23.6"/>
<path d="M386.53,190 L384.67,194 L383.22,198 L381.98,202 L380.88,206 L379.88,210 L378.96,214 L378.09,218 L377.27,222 L376.49,226 L375.74,230 L375.02,234 L374.32,238 L373.65,242 L372.99,246 L372.36,250 L371.74,254 L371.13,258 L370.53,262 L369.95,266 L369.37,270 L368.81,274 L368.25,278 L367.70,282 L367.16,286 L366.62,290 L366.09,294 L365.57,298 L365.05,302 L364.54,306 L364.03,310 L363.52,314 L363.02,318 L362.52,322 L362.02,326 L361.53,330 L361.03,334 L360.54,338 L360.05,342 L359.56,346 L359.08,350 L358.59,354 L358.11,358 L357.62,362 L357.14,366 L356.65,370 L356.17,374 L355.68,378 L355.19,382 L354.70,386 L354.21,390 L353.72,394 L353.23,398 L352.73,402 L352.23,406 L351.73,410 L351.23,414 L350.72,418 L350.21,422 L349.69,426 L349.17,430 L348.64,434 L348.11,438 L347.57,442 L347.03,446 L346.47,450 L345.91,454 L345.34,458 L344.76,462 L344.17,466 L343.57,470 L342.96,474 L342.33,478 L341.68,482 L341.02,486 L340.33,490 L339.63,494 L338.89,498 L338.13,502 L337.33,506 L336.48,510 L335.59,514 L334.63,518 L333.58,522 L332.42,526 L331.09,530 L329.48,534 L327.46,538" fill="none" stroke="#ff6a00" stroke-width="18.2"/>
<path d="M386.53,190 L384.67,194 L383.22,198 L381.98,202 L380.88,206 L379.88,210 L378.96,214 L378.09,218 L377.27,222 L376.49,226 L375.74,230 L375.02,234 L374.32,238 L373.65,242 L372.99,246 L372.36,250 L371.74,254 L371.13,258 L370.53,262 L369.95,266 L369.37,270 L368.81,274 L368.25,278 L367.70,282 L367.16,286 L366.62,290 L366.09,294 L365.57,298 L365.05,302 L364.54,306 L364.03,310 L363.52,314 L363.02,318 L362.52,322 L362.02,326 L361.53,330 L361.03,334 L360.54,338 L360.05,342 L359.56,346 L359.08,350 L358.59,354 L358.11,358 L357.62,362 L357.14,366 L356.65,370 L356.17,374 L355.68,378 L355.19,382 L354.70,386 L354.21,390 L353.72,394 L353.23,398 L352.73,402 L352.23,406 L351.73,410 L351.23,414 L350.72,418 L350.21,422 L349.69,426 L349.17,430 L348.64,434 L348.11,438 L347.57,442 L347.03,446 L346.47,450 L345.91,454 L345.34,458 L344.76,462 L344.17,466 L343.57,470 L342.96,474 L342.33,478 L341.68,482 L341.02,486 L340.33,490 L339.63,494 L338.89,498 L338.13,502 L337.33,506 L336.48,510 L335.59,514 L334.63,518 L333.58,522 L332.42,526 L331.09,530 L329.48,534 L327.46,538" fill="none" stroke="#ff8600" stroke-width="12.8"/>
<path d="M386.53,190 L384.67,194 L383.22,198 L381.98,202 L380.88,206 L379.88,210 L378.96,214 L378.09,218 L377.27,222 L376.49,226 L375.74,230 L375.02,234 L374.32,238 L373.65,242 L372.99,246 L372.36,250 L371.74,254 L371.13,258 L370.53,262 L369.95,266 L369.37,270 L368.81,274 L368.25,278 L367.70,282 L367.16,286 L366.62,290 L366.09,294 L365.57,298 L365.05,302 L364.54,306 L364.03,310 L363.52,314 L363.02,318 L362.52,322 L362.02,326 L361.53,330 L361.03,334 L360.54,338 L360.05,342 L359.56,346 L359.08,350 L358.59,354 L358.11,358 L357.62,362 L357.14,366 L356.65,370 L356.17,374 L355.68,378 L355.19,382 L354.70,386 L354.21,390 L353.72,394 L353.23,398 L352.73,402 L352.23,406 L351.73,410 L351.23,414 L350.72,418 L350.21,422 L349.69,426 L349.17,430 L348.64,434 L348.11,438 L347.57,442 L347.03,446 L346.47,450 L345.91,454 L345.34,458 L344.76,462 L344.17,466 L343.57,470 L342.96,474 L342.33,478 L341.68,482 L341.02,486 L340.33,490 L339.63,494 L338.89,498 L338.13,502 L337.33,506 L336.48,510 L335.59,514 L334.63,518 L333.58,522 L332.42,526 L331.09,530 L329.48,534 L327.46,538" fill="none" stroke="#ff9a00" stroke-width="6.4"/>
</g>
</g>
<rect x="50" y="167" width="402" height="38" fill="url(#band)"/>
<rect x="50" y="203" width="3" height="2" fill="#0b0000"/>
<rect x="53" y="164" width="6" height="3" fill="#700000"/>
<rect x="53" y="205" width="6" height="4" fill="#b00000"/>
<rect x="59" y="167" width="3" height="2" fill="#0b0000"/>
<rect x="62" y="205" width="3" height="4" fill="#700000"/>
<rect x="65" y="165" width="3" height="2" fill="#b00000"/>
<rect x="65" y="205" width="3" height="2" fill="#900000"/>
<rect x="71" y="205" width="4" height="2" fill="#b00000"/>
<rect x="75" y="205" width="5" height="2" fill="#b00000"/>
<rect x="80" y="165" width="3" height="2" fill="#900000"/>
<rect x="83" y="164" width="6" height="3" fill="#700000"/>
<rect x="83" y="205" width="6" height="2" fill="#900000"/>
<rect x="89" y="205" width="3" height="4" fill="#900000"/>
<rect x="97" y="167" width="4" height="2" fill="#0b0000"/>
<rect x="101" y="165" width="2" height="2" fill="#c80800"/>
<rect x="103" y="167" width="3" height="2" fill="#0b0000"/>
<rect x="103" y="203" width="3" height="2" fill="#0b0000"/>
<rect x="106" y="203" width="4" height="2" fill="#0b0000"/>
<rect x="116" y="203" width="3" height="2" fill="#0b0000"/>
<rect x="119" y="205" width="2" height="4" fill="#700000"/>
<rect x="121" y="164" width="3" height="3" fill="#900000"/>
<rect x="124" y="164" width="2" height="3" fill="#c80800"/>
<rect x="124" y="203" width="2" height="2" fill="#0b0000"/>
<rect x="126" y="205" width="4" height="4" fill="#c80800"/>
<rect x="130" y="167" width="4" height="2" fill="#0b0000"/>
<rect x="134" y="205" width="5" height="4" fill="#900000"/>
<rect x="139" y="165" width="5" height="2" fill="#b00000"/>
<rect x="144" y="163" width="6" height="4" fill="#c80800"/>
<rect x="144" y="203" width="6" height="2" fill="#0b0000"/>
<rect x="150" y="205" width="5" height="4" fill="#900000"/>
<rect x="155" y="205" width="4" height="2" fill="#c80800"/>
<rect x="159" y="205" width="3" height="3" fill="#700000"/>
<rect x="165" y="167" width="3" height="2" fill="#0b0000"/>
<rect x="168" y="205" width="4" height="2" fill="#c80800"/>
<rect x="172" y="167" width="5" height="2" fill="#0b0000"/>
<rect x="172" y="203" width="5" height="2" fill="#0b0000"/>
<rect x="177" y="163" width="3" height="4" fill="#700000"/>
<rect x="180" y="205" width="5" height="4" fill="#b00000"/>
<rect x="185" y="164" width="5" height="3" fill="#b00000"/>
<rect x="185" y="203" width="5" height="2" fill="#0b0000"/>
<rect x="194" y="165" width="3" height="2" fill="#900000"/>
<rect x="197" y="205" width="5" height="2" fill="#900000"/>
<rect x="202" y="164" width="5" height="3" fill="#b00000"/>
<rect x="202" y="205" width="5" height="4" fill="#b00000"/>
<rect x="212" y="164" width="3" height="3" fill="#700000"/>
<rect x="212" y="205" width="3" height="3" fill="#b00000"/>
<rect x="215" y="165" width="3" height="2" fill="#b00000"/>
<rect x="215" y="203" width="3" height="2" fill="#0b0000"/>
<rect x="218" y="164" width="3" height="3" fill="#900000"/>
<rect x="221" y="203" width="3" height="2" fill="#0b0000"/>
<rect x="224" y="203" width="3" height="2" fill="#0b0000"/>
<rect x="227" y="163" width="6" height="4" fill="#b00000"/>
<rect x="227" y="205" width="6" height="3" fill="#b00000"/>
<rect x="233" y="205" width="6" height="3" fill="#b00000"/>
<rect x="242" y="163" width="5" height="4" fill="#b00000"/>
<rect x="247" y="205" width="2" height="4" fill="#700000"/>
<rect x="249" y="205" width="3" height="4" fill="#700000"/>
<rect x="252" y="205" width="3" height="2" fill="#700000"/>
<rect x="255" y="205" width="6" height="3" fill="#900000"/>
<rect x="267" y="203" width="5" height="2" fill="#0b0000"/>
<rect x="272" y="163" width="6" height="4" fill="#b00000"/>
<rect x="278" y="205" width="3" height="2" fill="#c80800"/>
<rect x="281" y="164" width="3" height="3" fill="#700000"/>
<rect x="284" y="164" width="5" height="3" fill="#b00000"/>
<rect x="284" y="205" width="5" height="4" fill="#b00000"/>
<rect x="303" y="205" width="3" height="4" fill="#900000"/>
<rect x="306" y="164" width="2" height="3" fill="#b00000"/>
<rect x="308" y="167" width="2" height="2" fill="#0b0000"/>
<rect x="308" y="205" width="2" height="2" fill="#700000"/>
<rect x="310" y="167" width="2" height="2" fill="#0b0000"/>
<rect x="315" y="167" width="4" height="2" fill="#0b0000"/>
<rect x="315" y="205" width="4" height="3" fill="#700000"/>
<rect x="319" y="163" width="3" height="4" fill="#b00000"/>
<rect x="319" y="203" width="3" height="2" fill="#0b0000"/>
<rect x="322" y="205" width="3" height="4" fill="#900000"/>
<rect x="325" y="165" width="4" height="2" fill="#900000"/>
<rect x="325" y="205" width="4" height="3" fill="#900000"/>
<rect x="329" y="163" width="3" height="4" fill="#b00000"/>
<rect x="332" y="165" width="5" height="2" fill="#900000"/>
<rect x="332" y="205" width="5" height="2" fill="#b00000"/>
<rect x="337" y="163" width="5" height="4" fill="#900000"/>
<rect x="342" y="205" width="3" height="4" fill="#900000"/>
<rect x="345" y="164" width="4" height="3" fill="#900000"/>
<rect x="345" y="205" width="4" height="3" fill="#700000"/>
<rect x="349" y="205" width="2" height="2" fill="#c80800"/>
<rect x="351" y="205" width="6" height="2" fill="#c80800"/>
<rect x="360" y="167" width="2" height="2" fill="#0b0000"/>
<rect x="362" y="165" width="2" height="2" fill="#c80800"/>
<rect x="364" y="205" width="4" height="2" fill="#900000"/>
<rect x="372" y="165" width="3" height="2" fill="#900000"/>
<rect x="375" y="205" width="3" height="2" fill="#900000"/>
<rect x="384" y="167" width="3" height="2" fill="#0b0000"/>
<rect x="384" y="205" width="3" height="3" fill="#900000"/>
<rect x="389" y="164" width="6" height="3" fill="#b00000"/>
<rect x="389" y="205" width="6" height="2" fill="#b00000"/>
<rect x="400" y="203" width="4" height="2" fill="#0b0000"/>
<rect x="404" y="165" width="2" height="2" fill="#700000"/>
<rect x="404" y="205" width="2" height="3" fill="#900000"/>
<rect x="409" y="163" width="2" height="4" fill="#c80800"/>
<rect x="409" y="205" width="2" height="3" fill="#c80800"/>
<rect x="411" y="164" width="2" height="3" fill="#700000"/>
<rect x="411" y="203" width="2" height="2" fill="#0b0000"/>
<rect x="413" y="167" width="5" height="2" fill="#0b0000"/>
<rect x="413" y="205" width="5" height="2" fill="#700000"/>
<rect x="418" y="167" width="3" height="2" fill="#0b0000"/>
<rect x="421" y="164" width="2" height="3" fill="#c80800"/>
<rect x="423" y="167" width="2" height="2" fill="#0b0000"/>
<rect x="423" y="205" width="2" height="2" fill="#900000"/>
<rect x="425" y="205" width="3" height="4" fill="#b00000"/>
<rect x="428" y="167" width="6" height="2" fill="#0b0000"/>
<rect x="434" y="165" width="3" height="2" fill="#c80800"/>
<rect x="434" y="203" width="3" height="2" fill="#0b0000"/>
<rect x="437" y="167" width="5" height="2" fill="#0b0000"/>
<rect x="437" y="205" width="5" height="3" fill="#900000"/>
<rect x="448" y="163" width="6" height="4" fill="#b00000"/>
<rect x="50" y="522" width="402" height="38" fill="url(#band)"/>
<rect x="50" y="518" width="6" height="4" fill="#c80800"/>
<rect x="50" y="560" width="6" height="3" fill="#b00000"/>
<rect x="56" y="518" width="6" height="4" fill="#700000"/>
<rect x="56" y="560" width="6" height="4" fill="#700000"/>
<rect x="66" y="522" width="6" height="2" fill="#0b0000"/>
<rect x="66" y="560" width="6" height="3" fill="#c80800"/>
<rect x="72" y="522" width="3" height="2" fill="#0b0000"/>
<rect x="75" y="522" width="5" height="2" fill="#0b0000"/>
<rect x="75" y="560" width="5" height="3" fill="#c80800"/>
<rect x="82" y="560" width="3" height="3" fill="#700000"/>
<rect x="85" y="560" width="3" height="2" fill="#b00000"/>
<rect x="88" y="558" width="3" height="2" fill="#0b0000"/>
<rect x="91" y="522" width="4" height="2" fill="#0b0000"/>
<rect x="91" y="560" width="4" height="2" fill="#c80800"/>
<rect x="95" y="519" width="4" height="3" fill="#b00000"/>
<rect x="99" y="519" width="6" height="3" fill="#b00000"/>
<rect x="108" y="519" width="6" height="3" fill="#900000"/>
<rect x="108" y="560" width="6" height="3" fill="#b00000"/>
<rect x="114" y="520" width="6" height="2" fill="#b00000"/>
<rect x="114" y="558" width="6" height="2" fill="#0b0000"/>
<rect x="132" y="519" width="3" height="3" fill="#c80800"/>
<rect x="132" y="560" width="3" height="2" fill="#b00000"/>
<rect x="135" y="560" width="6" height="4" fill="#700000"/>
<rect x="147" y="560" width="6" height="4" fill="#b00000"/>
<rect x="153" y="520" width="2" height="2" fill="#c80800"/>
<rect x="155" y="518" width="3" height="4" fill="#700000"/>
<rect x="158" y="522" width="5" height="2" fill="#0b0000"/>
<rect x="158" y="558" width="5" height="2" fill="#0b0000"/>
<rect x="163" y="518" width="6" height="4" fill="#b00000"/>
<rect x="169" y="520" width="2" height="2" fill="#700000"/>
<rect x="169" y="560" width="2" height="4" fill="#b00000"/>
<rect x="171" y="560" width="4" height="3" fill="#900000"/>
<rect x="175" y="560" width="5" height="2" fill="#700000"/>
<rect x="180" y="558" width="4" height="2" fill="#0b0000"/>
<rect x="184" y="518" width="3" height="4" fill="#b00000"/>
<rect x="184" y="560" width="3" height="3" fill="#c80800"/>
<rect x="187" y="519" width="2" height="3" fill="#b00000"/>
<rect x="187" y="558" width="2" height="2" fill="#0b0000"/>
<rect x="189" y="560" width="6" height="2" fill="#c80800"/>
<rect x="195" y="519" width="2" height="3" fill="#c80800"/>
<rect x="203" y="560" width="5" height="4" fill="#c80800"/>
<rect x="208" y="560" width="2" height="2" fill="#900000"/>
<rect x="210" y="560" width="3" height="4" fill="#b00000"/>
<rect x="216" y="520" width="6" height="2" fill="#c80800"/>
<rect x="222" y="519" width="4" height="3" fill="#700000"/>
<rect x="226" y="518" width="2" height="4" fill="#c80800"/>
<rect x="228" y="522" width="4" height="2" fill="#0b0000"/>
<rect x="232" y="522" width="3" height="2" fill="#0b0000"/>
<rect x="235" y="558" width="6" height="2" fill="#0b0000"/>
<rect x="241" y="560" width="2" height="2" fill="#c80800"/>
<rect x="243" y="520" width="4" height="2" fill="#c80800"/>
<rect x="247" y="520" width="5" height="2" fill="#c80800"/>
<rect x="255" y="520" width="3" height="2" fill="#c80800"/>
<rect x="258" y="520" width="3" height="2" fill="#b00000"/>
<rect x="258" y="558" width="3" height="2" fill="#0b0000"/>
<rect x="261" y="560" width="3" height="3" fill="#b00000"/>
<rect x="264" y="558" width="3" height="2" fill="#0b0000"/>
<rect x="267" y="560" width="3" height="4" fill="#c80800"/>
<rect x="270" y="558" width="6" height="2" fill="#0b0000"/>
<rect x="276" y="558" width="4" height="2" fill="#0b0000"/>
<rect x="280" y="560" width="4" height="2" fill="#b00000"/>
<rect x="287" y="558" width="6" height="2" fill="#0b0000"/>
<rect x="293" y="560" width="3" height="2" fill="#b00000"/>
<rect x="296" y="560" width="5" height="3" fill="#b00000"/>
<rect x="301" y="518" width="4" height="4" fill="#c80800"/>
<rect x="301" y="560" width="4" height="3" fill="#b00000"/>
<rect x="305" y="558" width="3" height="2" fill="#0b0000"/>
<rect x="312" y="522" width="6" height="2" fill="#0b0000"/>
<rect x="318" y="560" width="6" height="3" fill="#c80800"/>
<rect x="324" y="518" width="3" height="4" fill="#c80800"/>
<rect x="324" y="558" width="3" height="2" fill="#0b0000"/>
<rect x="327" y="518" width="2" height="4" fill="#b00000"/>
<rect x="329" y="560" width="5" height="4" fill="#b00000"/>
<rect x="334" y="560" width="5" height="4" fill="#c80800"/>
<rect x="339" y="522" width="6" height="2" fill="#0b0000"/>
<rect x="345" y="560" width="4" height="2" fill="#c80800"/>
<rect x="353" y="519" width="5" height="3" fill="#b00000"/>
<rect x="353" y="558" width="5" height="2" fill="#0b0000"/>
<rect x="358" y="519" width="2" height="3" fill="#900000"/>
<rect x="360" y="522" width="3" height="2" fill="#0b0000"/>
<rect x="360" y="560" width="3" height="3" fill="#700000"/>
<rect x="363" y="522" width="5" height="2" fill="#0b0000"/>
<rect x="371" y="520" width="5" height="2" fill="#700000"/>
<rect x="371" y="560" width="5" height="2" fill="#700000"/>
<rect x="376" y="520" width="6" height="2" fill="#c80800"/>
<rect x="376" y="560" width="6" height="4" fill="#700000"/>
<rect x="388" y="560" width="3" height="3" fill="#b00000"/>
<rect x="394" y="522" width="2" height="2" fill="#0b0000"/>
<rect x="396" y="518" width="5" height="4" fill="#b00000"/>
<rect x="396" y="560" width="5" height="2" fill="#b00000"/>
<rect x="404" y="560" width="4" height="2" fill="#900000"/>
<rect x="408" y="522" width="4" height="2" fill="#0b0000"/>
<rect x="412" y="560" width="3" height="2" fill="#c80800"/>
<rect x="415" y="519" width="3" height="3" fill="#700000"/>
<rect x="418" y="518" width="6" height="4" fill="#700000"/>
<rect x="418" y="560" width="6" height="2" fill="#b00000"/>
<rect x="428" y="558" width="2" height="2" fill="#0b0000"/>
<rect x="438" y="519" width="3" height="3" fill="#900000"/>
<rect x="441" y="520" width="3" height="2" fill="#900000"/>
<rect x="444" y="520" width="3" height="2" fill="#b00000"/>
<rect x="444" y="560" width="3" height="4" fill="#900000"/>
<rect x="447" y="520" width="3" height="2" fill="#700000"/>
<rect x="447" y="558" width="3" height="2" fill="#0b0000"/>
<rect x="450" y="518" width="5" height="4" fill="#c80800"/>
</g>
<rect x="89" y="98" width="1" height="531" fill="#8c8c8c" fill-opacity="0.28"/>
<rect x="130" y="98" width="1" height="531" fill="#8c8c8c" fill-opacity="0.28"/>
<rect x="170" y="98" width="1" height="531" fill="#8c8c8c" fill-opacity="0.28"/>
<rect x="210" y="98" width="1" height="531" fill="#8c8c8c" fill-opacity="0.28"/>
<rect x="250" y="98" width="1" height="531" fill="#8c8c8c" fill-opacity="0.28"/>
<rect x="291" y="98" width="1" height="531" fill="#8c8c8c" fill-opacity="0.28"/>
<rect x="331" y="98" width="1" height="531" fill="#8c8c8c" fill-opacity="0.28"/>
<rect x="371" y="98" width="1" height="531" fill="#8c8c8c" fill-opacity="0.28"/>
<rect x="412" y="98" width="1" height="531" fill="#8c8c8c" fill-opacity="0.28"/>
<rect x="50" y="540" width="402" height="1" fill="#8c8c8c" fill-opacity="0.28"/>
<rect x="50" y="452" width="402" height="1" fill="#8c8c8c" fill-opacity="0.28"/>
<rect x="50" y="363" width="402" height="1" fill="#8c8c8c" fill-opacity="0.28"/>
<rect x="50" y="274" width="402" height="1" fill="#8c8c8c" fill-opacity="0.28"/>
<rect x="50" y="186" width="402" height="1" fill="#8c8c8c" fill-opacity="0.28"/>
<rect x="89" y="624" width="1" height="5" fill="#bdbdbd"/>
<rect x="89" y="98" width="1" height="5" fill="#bdbdbd"/>
<rect x="130" y="624" width="1" height="5" fill="#bdbdbd"/>
<rect x="130" y="98" width="1" height="5" fill="#bdbdbd"/>
<rect x="170" y="624" width="1" height="5" fill="#bdbdbd"/>
<rect x="170" y="98" width="1" height="5" fill="#bdbdbd"/>
<rect x="210" y="624" width="1" height="5" fill="#bdbdbd"/>
<rect x="210" y="98" width="1" height="5" fill="#bdbdbd"/>
<rect x="250" y="624" width="1" height="5" fill="#bdbdbd"/>
<rect x="250" y="98" width="1" height="5" fill="#bdbdbd"/>
<rect x="291" y="624" width="1" height="5" fill="#bdbdbd"/>
<rect x="291" y="98" width="1" height="5" fill="#bdbdbd"/>
<rect x="331" y="624" width="1" height="5" fill="#bdbdbd"/>
<rect x="331" y="98" width="1" height="5" fill="#bdbdbd"/>
<rect x="371" y="624" width="1" height="5" fill="#bdbdbd"/>
<rect x="371" y="98" width="1" height="5" fill="#bdbdbd"/>
<rect x="412" y="624" width="1" height="5" fill="#bdbdbd"/>
<rect x="412" y="98" width="1" height="5" fill="#bdbdbd"/>
<rect x="50" y="540" width="5" height="1" fill="#bdbdbd"/>
<rect x="448" y="540" width="4" height="1" fill="#bdbdbd"/>
<rect x="50" y="452" width="5" height="1" fill="#bdbdbd"/>
<rect x="448" y="452" width="4" height="1" fill="#bdbdbd"/>
<rect x="50" y="363" width="5" height="1" fill="#bdbdbd"/>
<rect x="448" y="363" width="4" height="1" fill="#bdbdbd"/>
<rect x="50" y="274" width="5" height="1" fill="#bdbdbd"/>
<rect x="448" y="274" width="4" height="1" fill="#bdbdbd"/>
<rect x="50" y="186" width="5" height="1" fill="#bdbdbd"/>
<rect x="448" y="186" width="4" height="1" fill="#bdbdbd"/>
<rect x="49.5" y="97.5" width="403" height="532" fill="none" stroke="#c4c4c4"/>
<rect x="137" y="628" width="2" height="1" fill="#1a64e0"/>
<rect x="138" y="628" width="1" height="1" fill="#2a80ff"/>
<rect x="139" y="625" width="2" height="4" fill="#1a64e0"/>
<rect x="140" y="625" width="1" height="4" fill="#2a80ff"/>
<rect x="141" y="612" width="2" height="17" fill="#1a64e0"/>
<rect x="142" y="612" width="1" height="17" fill="#2a80ff"/>
<rect x="143" y="603" width="2" height="26" fill="#1a64e0"/>
<rect x="144" y="603" width="1" height="26" fill="#2a80ff"/>
<rect x="145" y="588" width="2" height="41" fill="#1a64e0"/>
<rect x="146" y="588" width="1" height="41" fill="#2a80ff"/>
<rect x="147" y="567" width="2" height="62" fill="#1a64e0"/>
<rect x="148" y="567" width="1" height="62" fill="#2a80ff"/>
<rect x="149" y="512" width="2" height="117" fill="#1a64e0"/>
<rect x="150" y="512" width="1" height="117" fill="#2a80ff"/>
<rect x="151" y="470" width="2" height="159" fill="#1a64e0"/>
<rect x="152" y="470" width="1" height="159" fill="#2a80ff"/>
<rect x="153" y="467" width="2" height="162" fill="#1a64e0"/>
<rect x="154" y="467" width="1" height="162" fill="#2a80ff"/>
<rect x="155" y="418" width="2" height="211" fill="#1a64e0"/>
<rect x="156" y="418" width="1" height="211" fill="#2a80ff"/>
<rect x="157" y="417" width="2" height="212" fill="#1a64e0"/>
<rect x="158" y="417" width="1" height="212" fill="#2a80ff"/>
<rect x="159" y="455" width="2" height="174" fill="#1a64e0"/>
<rect x="160" y="455" width="1" height="174" fill="#2a80ff"/>
<rect x="161" y="470" width="2" height="159" fill="#1a64e0"/>
<rect x="162" y="470" width="1" height="159" fill="#2a80ff"/>
<rect x="163" y="515" width="2" height="114" fill="#1a64e0"/>
<rect x="164" y="515" width="1" height="114" fill="#2a80ff"/>
<rect x="165" y="571" width="2" height="58" fill="#1a64e0"/>
<rect x="166" y="571" width="1" height="58" fill="#2a80ff"/>
<rect x="167" y="598" width="2" height="31" fill="#1a64e0"/>
<rect x="168" y="598" width="1" height="31" fill="#2a80ff"/>
<rect x="169" y="607" width="2" height="22" fill="#1a64e0"/>
<rect x="170" y="607" width="1" height="22" fill="#2a80ff"/>
<rect x="171" y="620" width="2" height="9" fill="#1a64e0"/>
<rect x="172" y="620" width="1" height="9" fill="#2a80ff"/>
<rect x="173" y="627" width="2" height="2" fill="#1a64e0"/>
<rect x="174" y="627" width="1" height="2" fill="#2a80ff"/>
<rect x="175" y="628" width="2" height="1" fill="#1a64e0"/>
<rect x="176" y="628" width="1" height="1" fill="#2a80ff"/>
<rect x="333" y="628" width="2" height="1" fill="#1a64e0"/>
<rect x="334" y="628" width="1" height="1" fill="#2a80ff"/>
<rect x="339" y="627" width="2" height="2" fill="#1a64e0"/>
<rect x="340" y="627" width="1" height="2" fill="#2a80ff"/>
<rect x="341" y="625" width="2" height="4" fill="#1a64e0"/>
<rect x="342" y="625" width="1" height="4" fill="#2a80ff"/>
<rect x="343" y="617" width="2" height="12" fill="#1a64e0"/>
<rect x="344" y="617" width="1" height="12" fill="#2a80ff"/>
<rect x="345" y="604" width="2" height="25" fill="#1a64e0"/>
<rect x="346" y="604" width="1" height="25" fill="#2a80ff"/>
<rect x="347" y="588" width="2" height="41" fill="#1a64e0"/>
<rect x="348" y="588" width="1" height="41" fill="#2a80ff"/>
<rect x="349" y="568" width="2" height="61" fill="#1a64e0"/>
<rect x="350" y="568" width="1" height="61" fill="#2a80ff"/>
<rect x="351" y="538" width="2" height="91" fill="#1a64e0"/>
<rect x="352" y="538" width="1" height="91" fill="#2a80ff"/>
<rect x="353" y="480" width="2" height="149" fill="#1a64e0"/>
<rect x="354" y="480" width="1" height="149" fill="#2a80ff"/>
<rect x="355" y="429" width="2" height="200" fill="#1a64e0"/>
<rect x="356" y="429" width="1" height="200" fill="#2a80ff"/>
<rect x="357" y="421" width="2" height="208" fill="#1a64e0"/>
<rect x="358" y="421" width="1" height="208" fill="#2a80ff"/>
<rect x="359" y="421" width="2" height="208" fill="#1a64e0"/>
<rect x="360" y="421" width="1" height="208" fill="#2a80ff"/>
<rect x="361" y="455" width="2" height="174" fill="#1a64e0"/>
<rect x="362" y="455" width="1" height="174" fill="#2a80ff"/>
<rect x="363" y="491" width="2" height="138" fill="#1a64e0"/>
<rect x="364" y="491" width="1" height="138" fill="#2a80ff"/>
<rect x="365" y="514" width="2" height="115" fill="#1a64e0"/>
<rect x="366" y="514" width="1" height="115" fill="#2a80ff"/>
<rect x="367" y="552" width="2" height="77" fill="#1a64e0"/>
<rect x="368" y="552" width="1" height="77" fill="#2a80ff"/>
<rect x="369" y="583" width="2" height="46" fill="#1a64e0"/>
<rect x="370" y="583" width="1" height="46" fill="#2a80ff"/>
<rect x="371" y="604" width="2" height="25" fill="#1a64e0"/>
<rect x="372" y="604" width="1" height="25" fill="#2a80ff"/>
<rect x="373" y="620" width="2" height="9" fill="#1a64e0"/>
<rect x="374" y="620" width="1" height="9" fill="#2a80ff"/>
<rect x="375" y="625" width="2" height="4" fill="#1a64e0"/>
<rect x="376" y="625" width="1" height="4" fill="#2a80ff"/>
<rect x="377" y="627" width="2" height="2" fill="#1a64e0"/>
<rect x="378" y="627" width="1" height="2" fill="#2a80ff"/>
<line x1="49" y1="363" x2="452" y2="363" stroke="#2a7fff" stroke-width="2" stroke-dasharray="8 8"/>
<rect x="50" y="363" width="5" height="1" fill="#bdbdbd"/>
<rect x="448" y="363" width="4" height="1" fill="#bdbdbd"/>
<rect x="49" y="97" width="1" height="533" fill="#c4c4c4"/>
<text x="44.8" y="102" font-size="11" fill="#c8c8c8" text-anchor="end" letter-spacing="0.6">1.5</text>
<text x="44.8" y="191" font-size="11" fill="#c8c8c8" text-anchor="end" letter-spacing="0.6">1</text>
<text x="44.8" y="279" font-size="11" fill="#c8c8c8" text-anchor="end" letter-spacing="0.6">0.5</text>
<text x="44.8" y="368" font-size="11" fill="#c8c8c8" text-anchor="end" letter-spacing="0.6">0</text>
<text x="44.8" y="457" font-size="11" fill="#c8c8c8" text-anchor="end" letter-spacing="0.6">-0.5</text>
<text x="44.8" y="545" font-size="11" fill="#c8c8c8" text-anchor="end" letter-spacing="0.6">-1</text>
<text x="44.8" y="634" font-size="11" fill="#c8c8c8" text-anchor="end" letter-spacing="0.6">-1.5</text>
<text x="49.3" y="643" font-size="11" fill="#c8c8c8" text-anchor="middle" letter-spacing="0.6">0</text>
<text x="89.6" y="643" font-size="11" fill="#c8c8c8" text-anchor="middle" letter-spacing="0.6">0.002</text>
<text x="129.9" y="643" font-size="11" fill="#c8c8c8" text-anchor="middle" letter-spacing="0.6">0.004</text>
<text x="170.20000000000002" y="643" font-size="11" fill="#c8c8c8" text-anchor="middle" letter-spacing="0.6">0.006</text>
<text x="210.5" y="643" font-size="11" fill="#c8c8c8" text-anchor="middle" letter-spacing="0.6">0.008</text>
<text x="250.8" y="643" font-size="11" fill="#c8c8c8" text-anchor="middle" letter-spacing="0.6">0.01</text>
<text x="291.1" y="643" font-size="11" fill="#c8c8c8" text-anchor="middle" letter-spacing="0.6">0.012</text>
<text x="331.40000000000003" y="643" font-size="11" fill="#c8c8c8" text-anchor="middle" letter-spacing="0.6">0.014</text>
<text x="371.7" y="643" font-size="11" fill="#c8c8c8" text-anchor="middle" letter-spacing="0.6">0.016</text>
<text x="412.0" y="643" font-size="11" fill="#c8c8c8" text-anchor="middle" letter-spacing="0.6">0.018</text>
<text x="452.3" y="643" font-size="11" fill="#c8c8c8" text-anchor="middle" letter-spacing="0.6">0.02</text>
<text x="250.5" y="658" font-size="13" fill="#c8c8c8" text-anchor="middle">Time</text>
<text x="0" y="0" font-size="13" fill="#c8c8c8" text-anchor="middle" transform="translate(18.5,364) rotate(-90)">Real Amplitude</text>
<path d="M467 354 L472 357 L467 360 Z" fill="#ffffff"/>
<path d="M467 362 L472 365 L467 368 Z" fill="#ffffff"/>
<path d="M467 370 L472 373 L467 376 Z" fill="#ffffff"/>
<path d="M467 378 L472 381 L467 384 Z" fill="#ffffff"/>
<path d="M467 386 L472 389 L467 392 Z" fill="#ffffff"/>
<rect x="480.5" y="81.5" width="269" height="508" fill="none" stroke="#8a8a8a"/>
<path d="M487 87 H492 M489.5 95 V89.5 M487.5 91.5 L489.5 89.3 L491.5 91.5" stroke="#fff" stroke-width="1.2" fill="none"/>
<path d="M497 87.5 H504 L500.5 94 Z" fill="#fff"/>
<text x="509.5" y="95" font-size="13.5" fill="#fff" font-weight="bold" letter-spacing="1.1">Eye Measurements</text>
<path d="M723 87.5 H728.8 V93 M728.3 88 L725 91.5 L725.5 93.5" stroke="#fff" stroke-width="1.3" fill="none"/>
<path d="M735.3 86.5 L742.7 93 M742.7 86.5 L735.3 93" stroke="#fff" stroke-width="1.5" fill="none"/>
<rect x="485.5" y="109.5" width="259" height="22" fill="none" stroke="#8a8a8a"/>
<rect x="485.5" y="132.5" width="259" height="170" fill="none" stroke="#8a8a8a"/>
<rect x="485.5" y="303.5" width="259" height="150" fill="none" stroke="#8a8a8a"/>
<rect x="485.5" y="454.5" width="259" height="130" fill="none" stroke="#8a8a8a"/>
<defs><linearGradient id="btnb" x1="0" y1="0" x2="1" y2="1"><stop offset="0" stop-color="#d0d0d0"/><stop offset="0.6" stop-color="#8a8a8a"/><stop offset="1" stop-color="#505050"/></linearGradient>
<linearGradient id="btng" x1="0" y1="0" x2="1" y2="1">
<stop offset="0" stop-color="#787878"/><stop offset="0.5" stop-color="#202020"/><stop offset="1" stop-color="#000"/></linearGradient></defs>
<path d="M490 115 L497 118.5 L490 122 Z" fill="#fff"/>
<text x="502.5" y="121" font-size="11" fill="#fff">Settings</text>
<rect x="720.5" y="111.5" width="20" height="15" fill="url(#btng)" stroke="url(#btnb)"/>
<path d="M725.2 120.8 L733.6 113 L736.4 115.8 L728 123.6 Z" fill="#e4a444" stroke="#7a4a10" stroke-width="0.5"/>
<path d="M726.4 121.4 L734.4 114" stroke="#f8dc98" stroke-width="1"/>
<path d="M733.6 113 L734.8 111.9 L737.6 114.7 L736.4 115.8 Z" fill="#e66a9e"/>
<path d="M725.2 120.8 L728 123.6 L723.2 125.6 Z" fill="#e8d0a0"/>
<path d="M724.1 123.2 L725.6 124.6 L723.2 125.6 Z" fill="#202020"/>
<path d="M490 138 H497.5 L493.75 145 Z" fill="#fff"/>
<text x="502.5" y="144" font-size="11" fill="#fff">Amplitude measurements (V)</text>
<rect x="694.5" y="134.5" width="20" height="15" fill="url(#btng)" stroke="url(#btnb)"/>
<polygon points="703.15,136.57 703.21,135.25 704.79,135.25 704.85,136.57 705.95,136.89 706.71,135.82 708.04,136.67 707.38,137.82 708.13,138.68 709.36,138.19 710.01,139.62 708.84,140.23 709.00,141.36 710.30,141.61 710.07,143.17 708.76,143.05 708.28,144.08 709.24,145.00 708.21,146.19 707.17,145.37 706.21,145.99 706.52,147.27 705.00,147.72 704.57,146.47 703.43,146.47 703.00,147.72 701.48,147.27 701.79,145.99 700.83,145.37 699.79,146.19 698.76,145.00 699.72,144.08 699.24,143.05 697.93,143.17 697.70,141.61 699.00,141.36 699.16,140.23 697.99,139.62 698.64,138.19 699.87,138.68 700.62,137.82 699.96,136.67 701.29,135.82 702.05,136.89" fill="#c8c8c8" stroke="#7a7a7a" stroke-width="0.8" stroke-linejoin="round"/>
<circle cx="704" cy="141.5" r="3.0" fill="#f4f4f4" stroke="#7a7a7a" stroke-width="0.8"/>
<circle cx="704" cy="141.5" r="1.4" fill="#404040"/>
<rect x="720.5" y="134.5" width="20" height="15" fill="url(#btng)" stroke="url(#btnb)"/>
<path d="M725.2 143.8 L733.6 136 L736.4 138.8 L728 146.6 Z" fill="#e4a444" stroke="#7a4a10" stroke-width="0.5"/>
<path d="M726.4 144.4 L734.4 137" stroke="#f8dc98" stroke-width="1"/>
<path d="M733.6 136 L734.8 134.9 L737.6 137.7 L736.4 138.8 Z" fill="#e66a9e"/>
<path d="M725.2 143.8 L728 146.6 L723.2 148.6 Z" fill="#e8d0a0"/>
<path d="M724.1 146.2 L725.6 147.6 L723.2 148.6 Z" fill="#202020"/>
<path d="M490 309 H497.5 L493.75 316 Z" fill="#fff"/>
<text x="502.5" y="315" font-size="11" fill="#fff">Time measurements (ms)</text>
<rect x="694.5" y="305.5" width="20" height="15" fill="url(#btng)" stroke="url(#btnb)"/>
<polygon points="703.15,307.57 703.21,306.25 704.79,306.25 704.85,307.57 705.95,307.89 706.71,306.82 708.04,307.67 707.38,308.82 708.13,309.68 709.36,309.19 710.01,310.62 708.84,311.23 709.00,312.36 710.30,312.61 710.07,314.17 708.76,314.05 708.28,315.08 709.24,316.00 708.21,317.19 707.17,316.37 706.21,316.99 706.52,318.27 705.00,318.72 704.57,317.47 703.43,317.47 703.00,318.72 701.48,318.27 701.79,316.99 700.83,316.37 699.79,317.19 698.76,316.00 699.72,315.08 699.24,314.05 697.93,314.17 697.70,312.61 699.00,312.36 699.16,311.23 697.99,310.62 698.64,309.19 699.87,309.68 700.62,308.82 699.96,307.67 701.29,306.82 702.05,307.89" fill="#c8c8c8" stroke="#7a7a7a" stroke-width="0.8" stroke-linejoin="round"/>
<circle cx="704" cy="312.5" r="3.0" fill="#f4f4f4" stroke="#7a7a7a" stroke-width="0.8"/>
<circle cx="704" cy="312.5" r="1.4" fill="#404040"/>
<rect x="720.5" y="305.5" width="20" height="15" fill="url(#btng)" stroke="url(#btnb)"/>
<path d="M725.2 314.8 L733.6 307 L736.4 309.8 L728 317.6 Z" fill="#e4a444" stroke="#7a4a10" stroke-width="0.5"/>
<path d="M726.4 315.4 L734.4 308" stroke="#f8dc98" stroke-width="1"/>
<path d="M733.6 307 L734.8 305.9 L737.6 308.7 L736.4 309.8 Z" fill="#e66a9e"/>
<path d="M725.2 314.8 L728 317.6 L723.2 319.6 Z" fill="#e8d0a0"/>
<path d="M724.1 317.2 L725.6 318.6 L723.2 319.6 Z" fill="#202020"/>
<path d="M490 460 H497.5 L493.75 467 Z" fill="#fff"/>
<text x="502.5" y="466" font-size="11" fill="#fff">Jitter measurements (ms)</text>
<rect x="694.5" y="456.5" width="20" height="15" fill="url(#btng)" stroke="url(#btnb)"/>
<polygon points="703.15,458.57 703.21,457.25 704.79,457.25 704.85,458.57 705.95,458.89 706.71,457.82 708.04,458.67 707.38,459.82 708.13,460.68 709.36,460.19 710.01,461.62 708.84,462.23 709.00,463.36 710.30,463.61 710.07,465.17 708.76,465.05 708.28,466.08 709.24,467.00 708.21,468.19 707.17,467.37 706.21,467.99 706.52,469.27 705.00,469.72 704.57,468.47 703.43,468.47 703.00,469.72 701.48,469.27 701.79,467.99 700.83,467.37 699.79,468.19 698.76,467.00 699.72,466.08 699.24,465.05 697.93,465.17 697.70,463.61 699.00,463.36 699.16,462.23 697.99,461.62 698.64,460.19 699.87,460.68 700.62,459.82 699.96,458.67 701.29,457.82 702.05,458.89" fill="#c8c8c8" stroke="#7a7a7a" stroke-width="0.8" stroke-linejoin="round"/>
<circle cx="704" cy="463.5" r="3.0" fill="#f4f4f4" stroke="#7a7a7a" stroke-width="0.8"/>
<circle cx="704" cy="463.5" r="1.4" fill="#404040"/>
<rect x="720.5" y="456.5" width="20" height="15" fill="url(#btng)" stroke="url(#btnb)"/>
<path d="M725.2 465.8 L733.6 458 L736.4 460.8 L728 468.6 Z" fill="#e4a444" stroke="#7a4a10" stroke-width="0.5"/>
<path d="M726.4 466.4 L734.4 459" stroke="#f8dc98" stroke-width="1"/>
<path d="M733.6 458 L734.8 456.9 L737.6 459.7 L736.4 460.8 Z" fill="#e66a9e"/>
<path d="M725.2 465.8 L728 468.6 L723.2 470.6 Z" fill="#e8d0a0"/>
<path d="M724.1 468.2 L725.6 469.6 L723.2 470.6 Z" fill="#202020"/>
<text x="633.5" y="171" font-size="11" fill="#fff" text-anchor="end">Eye levels:</text>
<text x="663" y="171" font-size="11" fill="#fff" text-anchor="middle">-1.01</text>
<text x="715" y="171" font-size="11" fill="#fff" text-anchor="middle">0.99</text>
<text x="633.5" y="191" font-size="11" fill="#fff" text-anchor="end">Eye amplitude:</text>
<text x="663" y="191" font-size="11" fill="#fff" text-anchor="middle">2.00</text>
<text x="633.5" y="211" font-size="11" fill="#fff" text-anchor="end">Eye height:</text>
<text x="663" y="211" font-size="11" fill="#fff" text-anchor="middle">1.80</text>
<text x="633.5" y="231" font-size="11" fill="#fff" text-anchor="end">Vertical opening:</text>
<text x="663" y="231" font-size="11" fill="#fff" text-anchor="middle">1.53</text>
<text x="633.5" y="251" font-size="11" fill="#fff" text-anchor="end">Eye SNR (unitless):</text>
<text x="663" y="251" font-size="11" fill="#fff" text-anchor="middle">30.51</text>
<text x="633.5" y="271" font-size="11" fill="#fff" text-anchor="end">Q factor (unitless):</text>
<text x="663" y="271" font-size="11" fill="#fff" text-anchor="middle">30.24</text>
<text x="633.5" y="291" font-size="11" fill="#fff" text-anchor="end">Crossing levels:</text>
<text x="663" y="291" font-size="11" fill="#fff" text-anchor="middle">-0.00</text>
<text x="715" y="291" font-size="11" fill="#fff" text-anchor="middle">-0.00</text>
<text x="633.5" y="342" font-size="11" fill="#fff" text-anchor="end">Crossing times:</text>
<text x="663" y="342" font-size="11" fill="#fff" text-anchor="middle">5.34</text>
<text x="715" y="342" font-size="11" fill="#fff" text-anchor="middle">15.35</text>
<text x="633.5" y="362" font-size="11" fill="#fff" text-anchor="end">Eye delay:</text>
<text x="663" y="362" font-size="11" fill="#fff" text-anchor="middle">10.35</text>
<text x="633.5" y="382" font-size="11" fill="#fff" text-anchor="end">Eye width:</text>
<text x="663" y="382" font-size="11" fill="#fff" text-anchor="middle">8.19</text>
<text x="633.5" y="402" font-size="11" fill="#fff" text-anchor="end">Horizontal opening:</text>
<text x="663" y="402" font-size="11" fill="#fff" text-anchor="middle">5.59</text>
<text x="633.5" y="422" font-size="11" fill="#fff" text-anchor="end">Rise time:</text>
<text x="663" y="422" font-size="11" fill="#fff" text-anchor="middle">--</text>
<text x="633.5" y="442" font-size="11" fill="#fff" text-anchor="end">Fall time:</text>
<text x="663" y="442" font-size="11" fill="#fff" text-anchor="middle">--</text>
<text x="633.5" y="493" font-size="11" fill="#fff" text-anchor="end">Deterministic jitter:</text>
<text x="663" y="493" font-size="11" fill="#fff" text-anchor="middle">-0.07</text>
<text x="633.5" y="513" font-size="11" fill="#fff" text-anchor="end">Random jitter:</text>
<text x="663" y="513" font-size="11" fill="#fff" text-anchor="middle">4.48</text>
<text x="633.5" y="533" font-size="11" fill="#fff" text-anchor="end">Total jitter:</text>
<text x="663" y="533" font-size="11" fill="#fff" text-anchor="middle">4.41</text>
<text x="633.5" y="553" font-size="11" fill="#fff" text-anchor="end">RMS jitter:</text>
<text x="663" y="553" font-size="11" fill="#fff" text-anchor="middle">0.30</text>
<text x="633.5" y="573" font-size="11" fill="#fff" text-anchor="end">Peak-to-peak jitter:</text>
<text x="663" y="573" font-size="11" fill="#fff" text-anchor="middle">2.20</text>
</svg></body></html>
